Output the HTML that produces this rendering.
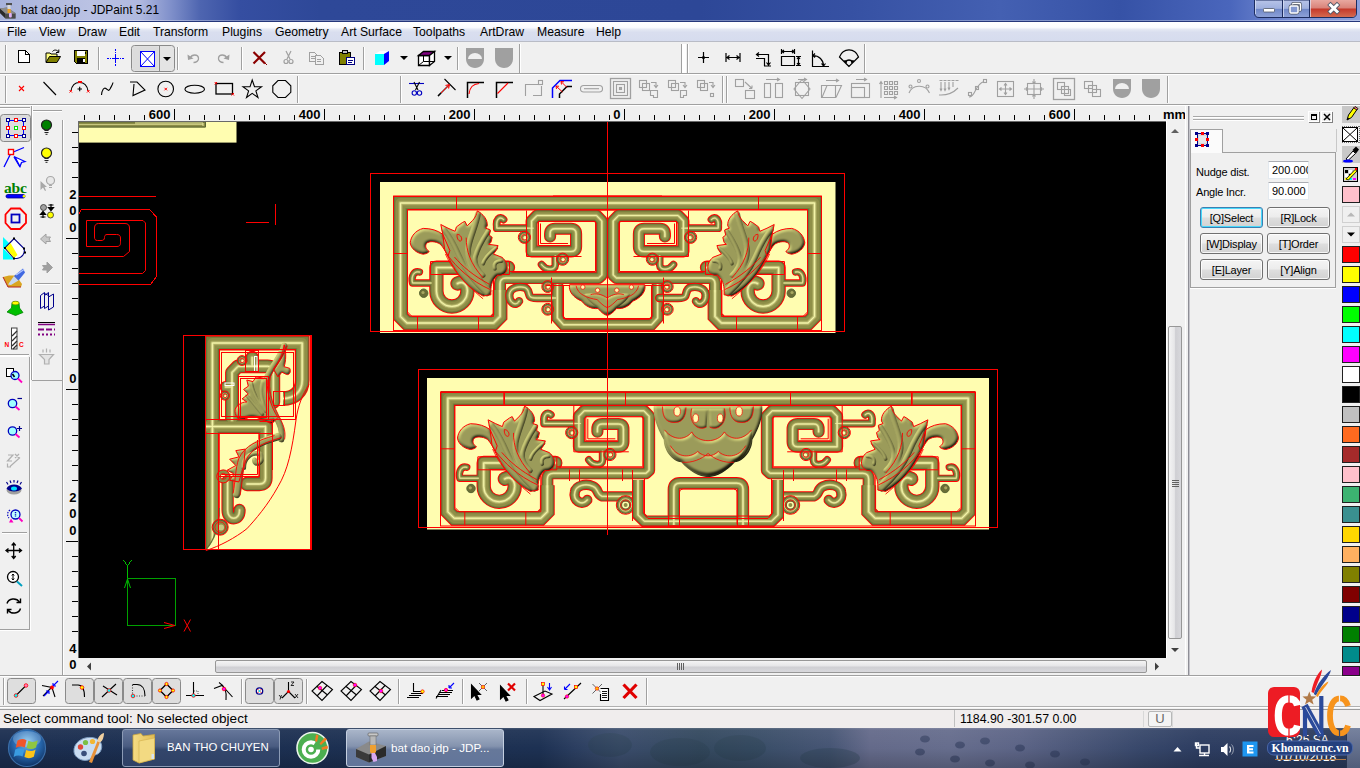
<!DOCTYPE html>
<html>
<head>
<meta charset="utf-8">
<title>bat dao.jdp - JDPaint 5.21</title>
<style>
html,body{margin:0;padding:0;}
body{width:1360px;height:768px;overflow:hidden;position:relative;background:#f0f0f0;font-family:"Liberation Sans",sans-serif;font-size:13px;color:#000;}
.abs{position:absolute;}
#title{left:0;top:0;width:1360px;height:22px;background:linear-gradient(90deg,#a7b2db 0px,#bac2e3 90px,#b0b9df 140px,#8191cb 170px,#4e65b0 200px,#354ea1 240px,#2e4898 320px,#2d4797 700px,#3651a3 850px,#4460b2 1000px,#3652a6 1120px,#4a66bc 1230px,#7d93d6 1300px,#8ca0dc 1360px);border-bottom:1px solid #25377a;box-sizing:border-box;}
#titleglow{left:0;top:20px;width:1360px;height:1px;background:rgba(255,255,255,.35);}
#titletxt{left:21px;top:3px;font-size:11.95px;color:#000;white-space:nowrap;}
#menubar{left:0;top:22px;width:1360px;height:20px;box-sizing:border-box;background:linear-gradient(180deg,#ffffff 0%,#fbfcfe 28%,#e3e7f3 40%,#d9deef 55%,#d6dcee 100%);border-bottom:1px solid #b9bcc6;}
#menubar span{position:absolute;top:3px;font-size:12.2px;white-space:nowrap;}
#canvas{left:78px;top:121px;width:1088px;height:537px;background:#000;overflow:hidden;box-sizing:border-box;border-left:1px solid #696969;border-top:1px solid #696969;}
.hline{height:1px;background:#a0a0a0;}
.hline2{height:1px;background:#ffffff;}
.vsep{width:1px;background:#a0a0a0;}
.vsep2{width:1px;background:#ffffff;}
.lbl{font-size:11px;letter-spacing:-.2px;white-space:nowrap;}
.inp{width:41px;height:18px;box-sizing:border-box;background:#fff;border:1px solid #e3e9ef;border-top-color:#abadb3;font-size:11px;line-height:16px;padding-left:3px;overflow:hidden;white-space:nowrap;border-radius:1px;}
.btn{width:63px;height:21px;box-sizing:border-box;border:1px solid #707070;border-radius:3px;background:linear-gradient(180deg,#f4f4f4 0%,#ececec 48%,#dedede 52%,#d2d2d2 100%);font-size:11px;letter-spacing:-.2px;line-height:20px;text-align:center;white-space:nowrap;box-shadow:inset 0 0 0 1px rgba(255,255,255,.8);}
.btn.foc{border-color:#3c7fb1;box-shadow:inset 0 0 0 1px #48d8fb;}
</style>
</head>
<body>
<!-- TITLE BAR -->
<div id="title" class="abs"></div>
<div id="titleglow" class="abs"></div>
<div id="titletxt" class="abs">bat dao.jdp - JDPaint 5.21</div>
<!--TITLE-START-->
<svg class="abs" style="left:0;top:0" width="1360" height="22" viewBox="0 0 1360 22">
<defs><linearGradient id="wb" x1="0" y1="0" x2="0" y2="1"><stop offset="0" stop-color="#b8c4e8"/><stop offset=".48" stop-color="#9fb0de"/><stop offset=".52" stop-color="#7088c8"/><stop offset="1" stop-color="#8ea2d8"/></linearGradient>
<linearGradient id="wr" x1="0" y1="0" x2="0" y2="1"><stop offset="0" stop-color="#e8a8a0"/><stop offset=".48" stop-color="#d98278"/><stop offset=".52" stop-color="#c4382a"/><stop offset="1" stop-color="#d46a50"/></linearGradient></defs>
<!-- app icon -->
<path d="M0 8.500L7 7.500L15.500 13V18.500H5.500L0 13Z" fill="#6a6a6a"/><path d="M0 8.500L5.500 13.500V18.500L0 13Z" fill="#2a2a2a"/><path d="M5.500 13.500H15.500V18.500H5.500Z" fill="#4a4a4a"/><path d="M0 8.500L7 7.500L15.500 13.500H5.500Z" fill="#8c8c8c"/>
<rect x="6" y="3" width="6" height="2.200" fill="#505050"/><rect x="7.500" y="5" width="3" height="4" fill="#d8d8d8"/><rect x="7.500" y="9" width="3.200" height="4" fill="#f0a020"/><rect x="9" y="13" width="2.800" height="4.500" rx="1" fill="#e0b0f8"/>
<!-- window buttons -->
<path d="M1254.500 0V13C1254.500 16 1256 17.500 1259 17.500H1352C1355 17.500 1356.500 16 1356.500 13V0Z" fill="url(#wb)" stroke="#1c2c60" stroke-width="1"/>
<path d="M1309.500 0V17H1352C1354.500 17 1356 15.500 1356 13V0Z" fill="url(#wr)"/>
<path d="M1282.500 0V17M1309.500 0V17" stroke="#1c2c60" stroke-width="1"/><path d="M1283.500 0V17M1310.500 0V17M1255.500 0V14" stroke="#dfe6f8" stroke-width="1" opacity=".7"/>
<rect x="1263.500" y="8.500" width="11" height="3.500" rx=".8" fill="#fff" stroke="#505868" stroke-width=".8"/>
<rect x="1292.500" y="3.500" width="8" height="7" rx="1" fill="none" stroke="#505868" stroke-width="2.800"/><rect x="1292.500" y="3.500" width="8" height="7" rx="1" fill="none" stroke="#fff" stroke-width="1.400"/>
<rect x="1290" y="6" width="8" height="7" rx="1" fill="#8398d0" stroke="#505868" stroke-width="2.800"/><rect x="1290" y="6" width="8" height="7" rx="1" fill="#8398d0" stroke="#fff" stroke-width="1.500"/>
<path d="M1330.500 5L1337 11.500M1337 5L1330.500 11.500" stroke="#505868" stroke-width="4.600" stroke-linecap="square"/><path d="M1330.500 5L1337 11.500M1337 5L1330.500 11.500" stroke="#fff" stroke-width="3" stroke-linecap="square"/>
</svg>
<!--TITLE-END-->
<!-- MENU -->
<div id="menubar" class="abs">
<span style="left:7px">File</span><span style="left:39px">View</span><span style="left:78px">Draw</span><span style="left:119px">Edit</span><span style="left:153px">Transform</span><span style="left:222px">Plugins</span><span style="left:275px">Geometry</span><span style="left:341px">Art Surface</span><span style="left:413px">Toolpaths</span><span style="left:480px">ArtDraw</span><span style="left:537px">Measure</span><span style="left:596px">Help</span>
</div>
<!-- TOOLBARS PLACEHOLDER -->
<div id="tb1" class="abs" style="left:0;top:43px;width:1360px;height:30px;"></div>
<div class="abs hline" style="left:0;top:73px;width:1360px;"></div>
<div class="abs hline2" style="left:0;top:74px;width:1360px;"></div>
<div id="tb2" class="abs" style="left:0;top:75px;width:1360px;height:29px;"></div>
<div class="abs hline" style="left:0;top:104px;width:1360px;"></div>
<div class="abs hline2" style="left:0;top:105px;width:1360px;"></div>
<!--TB-START-->
<!-- TOOLBAR ICONS (page coords) -->
<svg class="abs" style="left:0;top:0" width="1360" height="121" viewBox="0 0 1360 121" shape-rendering="crispEdges">
<!-- grippers toolbar1 -->
<g fill="none">
<path d="M5.5 45V71" stroke="#a0a0a0"/><path d="M6.5 45V71" stroke="#fff"/>
<path d="M98.5 47V70M177.5 47V70M241.5 47V70M363.5 47V70M457.5 47V70M519.5 44V73" stroke="#a0a0a0"/>
<path d="M99.5 47V70M178.5 47V70M242.5 47V70M364.5 47V70M458.5 47V70M520.5 44V73" stroke="#fff"/>
<path d="M681.5 44V73M687.5 44V73M864.5 44V73" stroke="#a0a0a0"/><path d="M682.5 44V73M683.5 44V73M684.5 44V73M685.5 44V73M688.5 44V73M865.5 44V73" stroke="#fff"/>
</g>
<!-- New -->
<path d="M18.5 50.5H25.5L29.5 54.5V62.5H18.5Z" fill="#fff" stroke="#000"/><path d="M25.5 50.5V54.5H29.5" fill="none" stroke="#000"/>
<!-- Open -->
<g shape-rendering="auto">
<path d="M46 62V53H50L51 54H57V56" fill="#ffff80" stroke="#000" stroke-width="1"/>
<path d="M46 62.5L49.5 56.5H60.5L57 62.5Z" fill="#808000" stroke="#000" stroke-width="1"/>
<path d="M52.5 51.5C54 49.5 57 49.5 58.5 52M58.8 49.5V52.5H56" fill="none" stroke="#000" stroke-width="1"/>
</g>
<!-- Save -->
<path d="M74.5 50.5H87.5V63.5H76.5L74.5 61.5Z" fill="#808000" stroke="#000"/>
<rect x="77" y="51" width="8" height="5" fill="#fff"/><rect x="77" y="58" width="8" height="5" fill="#000"/><rect x="83" y="59" width="2" height="3" fill="#fff"/><rect x="85" y="52" width="1" height="2" fill="#000"/>
<!-- crosshair blue -->
<path d="M107 58.5H124M115.5 49V67" stroke="#0000ff" stroke-dasharray="2 1 1 1" fill="none"/>
<path d="M112 58.5H119M115.5 55V62" stroke="#0000ff" fill="none"/>
<!-- selected button -->
<g shape-rendering="auto">
<rect x="131.5" y="45.5" width="43" height="26" rx="3" fill="#e4e4e4" stroke="#8a8a8a"/>
<rect x="132.5" y="46.5" width="26" height="24" rx="2" fill="#dcdcdc" stroke="none"/>
<path d="M159.5 46V71" stroke="#8a8a8a"/>
</g>
<rect x="140.500" y="51.500" width="14" height="15" fill="#fff" stroke="#0000ff" stroke-width="1"/>
<path d="M140.500 51.500L154.500 66.500M154.500 51.500L140.500 66.500" stroke="#0000ff" fill="none" shape-rendering="auto"/>
<path d="M163 57H171L167 61Z" fill="#000" shape-rendering="auto"/>
<!-- undo / redo gray -->
<g shape-rendering="auto" fill="none" stroke="#a0a0a0" stroke-width="1.3">
<path d="M190 58C192 54 198 54 198.500 58C199 61 196 62.500 193.500 62.500"/><path d="M187.500 54.500L188 60L193.500 58.500Z" fill="#a0a0a0" stroke="none"/>
<path d="M227 58C225 54 219 54 218.500 58C218 61 221 62.500 223.500 62.500"/><path d="M229.500 54.500L229 60L223.500 58.500Z" fill="#a0a0a0" stroke="none"/>
</g>
<!-- red X -->
<g shape-rendering="auto"><path d="M253.500 52L265 63.500M265 52L253.500 63.500" stroke="#8b0000" stroke-width="2.200" fill="none"/><path d="M265 63L267 65" stroke="#8b0000" stroke-width="1"/></g>
<!-- scissors gray -->
<g shape-rendering="auto" fill="none" stroke="#a0a0a0" stroke-width="1.200"><path d="M286 51L290 59M291 51L287 59"/><circle cx="286" cy="61.500" r="2"/><circle cx="291" cy="61.500" r="2"/></g>
<!-- copy gray -->
<g fill="#f0f0f0" stroke="#a0a0a0"><path d="M309.500 52.500H314.500L317.500 55.500V61.500H309.500Z"/><path d="M315.500 55.500H320.500L323.500 58.500V64.500H315.500Z"/><path d="M311 56.500H315M311 58.500H315M317 59.500H321M317 61.500H321" /></g>
<!-- paste -->
<g><rect x="339.500" y="52.500" width="11" height="12" fill="#808000" stroke="#000"/><rect x="342.500" y="50.500" width="5" height="3" fill="#c0c0c0" stroke="#000"/><rect x="346.500" y="57.500" width="8" height="7" fill="#fff" stroke="#000080"/><path d="M348 60.500H353M348 62.500H352" stroke="#000080"/></g>
<!-- cyan cube -->
<g shape-rendering="auto"><path d="M375 54H384V65H375Z" fill="#00ffff"/><path d="M375 54L380 51H389L384 54Z" fill="#fff"/><path d="M384 54L389 51V61L384 65Z" fill="#0000ff"/>
<path d="M400 56H408L404 60Z" fill="#000"/>
<!-- wire cube -->
<path d="M418.500 55.500H429.500V65.500H418.500Z" fill="#fff" stroke="#000" stroke-width="1.300"/><path d="M418.500 55.500L423.500 51.500H434.500L429.500 55.500Z" fill="#800080" stroke="#000" stroke-width="1.300"/><path d="M429.500 55.500L434.500 51.500V61.500L429.500 65.500Z" fill="#fff" stroke="#000" stroke-width="1.300"/><path d="M418.500 65.500L423.500 61.500H434.500M423.500 61.500V56" fill="none" stroke="#000" stroke-width="1"/>
<path d="M444 56H452L448 60Z" fill="#000"/>
<!-- gray shields -->
<path d="M466 48H484V59C484 64 480 68 475 68C470 68 466 64 466 59Z" fill="#a0a0a0"/><path d="M468 59A7 6 0 0 1 482 59Z" fill="#f0f0f0"/>
<path d="M495 48H513V59C513 64 509 68 504 68C499 68 495 64 495 59Z" fill="#a0a0a0"/>
</g>
<!-- measure icons -->
<g shape-rendering="auto" fill="none" stroke="#000" stroke-width="1.200">
<path d="M698 57.500H709M703.500 52V63"/><circle cx="703.500" cy="57.500" r="1.600" fill="#000" stroke="none"/>
<path d="M726 53V62M740 53V62M727 57.500H739M729.500 55.500L727 57.500L729.500 59.500M736.500 55.500L739 57.500L736.500 59.500"/>
<path d="M756.500 54.500H768.500V65M759 52.500L756.500 54.500L759 56.500M766.500 62.500L768.500 65L770.500 62.500M756 58.500H764.500V66M764 66H771" />
<path d="M781.500 56.500H794.500V65.500H781.500ZM781.500 49V54M794.500 49V54M782 51.500H794M784 50L782 51.500L784 53M792 50L794 51.500L792 53M796 56.500H801M796 65.500H801M798.500 57V65M797 59L798.500 57L800 59M797 63L798.500 65L800 63"/>
<path d="M812.500 50.500V66.500H829M813 55.500C819 55.500 823.500 60 823.500 66M815 53.500L813 55.500L815 57.500M821.500 63.500L823.500 66L825.500 63.500"/>
<path d="M849 66.500L839.500 57C843 47.500 855 47.500 858.500 57ZM845 62C847.500 59.500 850.500 59.500 853 62M845 60V62.200H847M853 60V62.200H851"/>
</g>
<!-- ===== toolbar 2 ===== -->
<g fill="none">
<path d="M5.500 76V103M297.500 76V103M400.500 76V103M722.500 76V103M726.500 76V103M1167.500 76V103" stroke="#a0a0a0"/>
<path d="M6.500 76V103M298.500 76V103M401.500 76V103M723.500 76V103M727.500 76V103M1168.500 76V103" stroke="#fff"/>
</g>
<g shape-rendering="auto" fill="none" stroke="#000" stroke-width="1.100">
<path d="M19 86L24 91M24 86L19 91" stroke="#ff0000"/>
<path d="M43.500 82L56 95"/>
<path d="M71 91C72 84.500 76 82.500 79.500 82.500C83 82.500 87 84.500 88 91M77.500 89H82M79.700 86.700V91.300"/>
<path d="M69.500 90L72 92.500M72 90L69.500 92.500M87 90L89.500 92.500M89.500 90L87 92.500M78 81L80 83M80 81L78 83M80 81L82 83M82 81L80 83" stroke="#ff0000" stroke-width="1"/>
<path d="M101.500 95C102 90 104 87 106 88.500C108 90 108.500 91.500 110 89C111.500 86 112.500 85 113 82.500"/>
<path d="M130 82H137L145 90L133 95.500L134 84"/>
<circle cx="165.700" cy="89" r="7.800"/><path d="M164.500 87.800L167 90.300M167 87.800L164.500 90.300" stroke="#ff0000" stroke-width="1"/>
<ellipse cx="194.700" cy="89.200" rx="9.800" ry="4"/>
<rect x="216" y="83.500" width="16.500" height="10.500" stroke-width="1.300"/><path d="M214.700 82L217 84.500M217 82L214.700 84.500M231.500 93L234 95.500M234 93L231.500 95.500" stroke="#ff0000" stroke-width="1"/>
<path d="M252.200 80L254.500 86.800H261.500L255.900 90.900L258 97.500L252.200 93.400L246.500 97.500L248.600 90.900L243 86.800H250Z"/>
<path d="M278 80.500H285.500L290.800 85.800V92.300L285.500 97.500H278L272.800 92.300V85.800Z"/>
</g>
<!-- toolbar2 middle group -->
<g shape-rendering="auto" fill="none" stroke="#000" stroke-width="1.100">
<path d="M409 83.500H424" stroke="#0000c0"/><path d="M414 82L418 90M419.500 82L415.500 90" /><circle cx="414.300" cy="93" r="2.200" stroke="#0000c0"/><circle cx="419.500" cy="93" r="2.200" stroke="#0000c0"/>
<path d="M444.500 79L455.500 90"/><path d="M438 96L449 85" /><path d="M449.500 84.500L445.500 85.500M449.500 84.500L448.500 88.500" stroke="#ff0000"/><path d="M440 94L449 85" stroke="#ff0000" stroke-width="1"/><path d="M438 96L441 93"/>
<path d="M467.500 98V82.500H484" stroke-width="1.500"/><path d="M469 94C469.500 88 473 84 479 83.500" stroke="#ff0000"/>
<path d="M496.500 98V82.500H513" stroke-width="1.500"/><path d="M497.500 93.500L508 83" stroke="#ff0000"/>
<g stroke="#a0a0a0"><path d="M525.500 96V84.500H538M541.500 86V95.500H533"/><rect x="538.500" y="80.500" width="4" height="4"/></g>
<path d="M552.500 98V88L560 80.500H572" stroke="#0000ff" stroke-width="1.500"/><path d="M559.500 98V94L567 86.500H572" stroke-width="1.500"/><path d="M562.500 92L556 86M556 86L556.500 89M556 86L559 86.300M567 87.500L561 81.500M561 81.500L561.500 84.500M561 81.500L564 81.800" stroke="#ff0000" stroke-width="1"/>
<g stroke="#a0a0a0"><rect x="580.500" y="85.500" width="22" height="6.500" rx="3.200"/><path d="M584 88.700H599"/>
<rect x="610.500" y="78.500" width="20" height="20" stroke-width="1.300"/><rect x="613.500" y="81.500" width="14" height="14"/><rect x="616.500" y="84.500" width="8" height="8"/><rect x="619.500" y="87.500" width="2" height="2"/>
<rect x="639.500" y="80.500" width="7" height="7"/><rect x="642.500" y="83.500" width="7" height="7"/><path d="M651 82.500H656V87M654 85L656 87.500L658 85"/><path d="M650.500 90.500H657.500V97.500H653.500V95.500H650.500Z"/>
<rect x="668.500" y="80.500" width="7" height="7"/><rect x="671.500" y="83.500" width="7" height="7"/><path d="M680 82.500H685V87M683 85L685 87.500L687 85"/><path d="M680.500 90.500H686.500V95.500H683.500V97.500H680.500Z"/>
<rect x="697.500" y="80.500" width="7" height="7"/><rect x="700.500" y="83.500" width="7" height="7"/><path d="M709 82.500H713V87M711 85L713 87.500L715 85"/><rect x="710.500" y="93.500" width="3" height="3"/>
</g>
</g>
<!-- toolbar2 gray transform group -->
<g shape-rendering="auto" fill="none" stroke="#a0a0a0" stroke-width="1.100">
<rect x="735.500" y="79.500" width="8" height="7"/><rect x="745.500" y="90.500" width="9" height="8"/><path d="M745 82L752 88.500M752 88.500V85.500M752 88.500H749"/>
<rect x="764.500" y="83.500" width="6" height="14"/><rect x="775.500" y="83.500" width="7" height="14"/><path d="M766 79.500H779M777 78L779.500 79.500L777 81"/>
<rect x="795.500" y="82.500" width="13" height="13"/><path d="M802 79.500L810 89L802 98.500L794 89Z"/><path d="M798 79.500H806M804 78L806.500 79.500L804 81"/>
<path d="M821.500 85.500H835.500V97.500H821.500Z"/><path d="M822 97.500L827 85.500H841.500L836 97.500"/><path d="M826 80.500H838M836 79L838.500 80.500L836 82"/>
<rect x="851.500" y="83.500" width="18" height="14"/><rect x="851.500" y="87.500" width="13" height="10"/><path d="M856 79.500H866M864 78L866.500 79.500L864 81"/>
<path d="M881 82V98M879.500 84L881 81.500L882.500 84"/><path d="M884.500 81.500h3v3h-3zM889.500 81.500h3v3h-3zM894.500 81.500h3v3h-3zM884.500 86.500h3v3h-3zM889.500 86.500h3v3h-3zM894.500 86.500h3v3h-3zM884.500 91.500h3v3h-3zM889.500 91.500h3v3h-3zM894.500 91.500h3v3h-3z"/><path d="M884 97.500H896M894 96L896.500 97.500L894 99"/>
<path d="M909 93C912 85 925 83 929.500 93"/><circle cx="919" cy="81" r="1.500"/><circle cx="927.500" cy="86.500" r="1.500"/><circle cx="910.500" cy="86.500" r="1.500"/>
<path d="M939 95C946 95.500 953 93 958 88"/><path d="M941 82V90M945 82V90M949 82V89M953 82V87M940 88.500L941 90.500L942 88.500M944 88.500L945 90.500L946 88.500M948 87.500L949 89.500L950 87.500"/><path d="M939.500 80.500h3M943.500 80.500h3M947.500 80.500h3M951.500 80.500h3M955.500 80.500h3" />
<path d="M969 97C976 97 974 85 984 81.500"/><rect x="968.500" y="92.500" width="3" height="3"/><rect x="975.500" y="86.500" width="3" height="3"/><rect x="983.500" y="79.500" width="3" height="3"/>
<rect x="997.500" y="81.500" width="16" height="15"/><path d="M1005.500 84V94M1000 89H1011M1004 85.500L1005.500 83.500L1007 85.500M1004 92.500L1005.500 94.500L1007 92.500M1001.500 87.500L999.500 89L1001.500 90.500M1009.500 87.500L1011.500 89L1009.500 90.500"/>
<rect x="1027.500" y="83.500" width="13" height="11"/><path d="M1034 79V99M1024 89H1044M1032.500 81.500L1034 84L1035.500 81.500M1032.500 96.500L1034 94L1035.500 96.500M1026 87.500L1028 89L1026 90.500M1042 87.500L1040 89L1042 90.500"/>
<rect x="1053.500" y="78.500" width="21" height="21" stroke-width="1.300"/><rect x="1057.500" y="82.500" width="7" height="7"/><rect x="1061.500" y="86.500" width="7" height="7"/><rect x="1064.500" y="89.500" width="6" height="6"/>
<rect x="1084.500" y="81.500" width="8" height="7"/><rect x="1088.500" y="85.500" width="8" height="7"/><rect x="1092.500" y="89.500" width="8" height="7"/>
<path d="M1113 79H1131V89C1131 94 1127 98 1122 98C1117 98 1113 94 1113 89Z" fill="#a0a0a0" stroke="none"/><path d="M1115 89A7 6 0 0 1 1129 89Z" fill="#f0f0f0" stroke="none"/>
<path d="M1142 79H1160V89C1160 94 1156 98 1151 98C1146 98 1142 94 1142 89Z" fill="#a0a0a0" stroke="none"/>
</g>
</svg>
<!--TB-END-->
<!--LEFT-START-->
<!-- LEFT TOOLBARS -->
<svg class="abs" style="left:0;top:0" width="80" height="680" viewBox="0 0 80 680">
<g shape-rendering="crispEdges" fill="none">
<path d="M0 107.500H30M33 110.500H62" stroke="#a0a0a0"/><path d="M0 108.500H30M33 111.500H62" stroke="#fff"/>
<path d="M31.500 106V380M62.500 120V676" stroke="#a0a0a0"/><path d="M32.500 106V380M63.500 120V676" stroke="#fff"/>
<path d="M32 380.500H62M0 354.500H29M0 629.500H30" stroke="#a0a0a0"/><path d="M0 355.500H29M0 356.500H28" stroke="#fff"/>
<path d="M29.500 357V629" stroke="#a0a0a0"/><path d="M30.500 357V630M0 630.500H31" stroke="#fff"/>
<path d="M35 283.500H60M2 532.500H27" stroke="#a0a0a0"/><path d="M35 284.500H60M2 533.500H27" stroke="#fff"/>
</g>
<!-- select tool button -->
<rect x="0.500" y="114.500" width="30" height="27" rx="3" fill="#dcdcdc" stroke="#8a8a8a"/>
<g shape-rendering="crispEdges">
<rect x="8.500" y="120.500" width="15" height="15" fill="none" stroke="#0000ff" stroke-width="1"/>
<g fill="#fff" stroke="#00008b"><rect x="6.500" y="118.500" width="3" height="3"/><rect x="22.500" y="118.500" width="3" height="3"/><rect x="6.500" y="134.500" width="3" height="3"/><rect x="22.500" y="134.500" width="3" height="3"/></g>
<g fill="#fff" stroke="#ff0000"><rect x="14.500" y="118.500" width="3" height="3"/><rect x="14.500" y="134.500" width="3" height="3"/><rect x="6.500" y="126.500" width="3" height="3"/><rect x="22.500" y="126.500" width="3" height="3"/></g>
<rect x="14.500" y="126.500" width="3" height="3" fill="#fff" stroke="#00e000"/>
</g>
<!-- node tool -->
<g fill="none" stroke="#0000ff" stroke-width="1.300"><path d="M11 153L4 167M11 153L24 147.500M14 157L20 167"/><path d="M15 157L25 161.500L21.500 162.500L20 166.500Z" fill="#fff"/></g>
<rect x="8.500" y="149.500" width="5" height="5" fill="#fff" stroke="#ff0000" stroke-width="1.400"/>
<!-- abc -->
<text x="15.500" y="193" font-family="Liberation Serif, serif" font-weight="bold" font-size="15.500px" fill="#008000" text-anchor="middle" textLength="23">abc</text>
<rect x="6" y="194.500" width="19" height="3.500" rx="1.700" fill="#0000ff" stroke="#00008b" stroke-width=".8"/><circle cx="24" cy="196.200" r="1.300" fill="#ffff00"/>
<!-- octagon -->
<path d="M11 208.500H20L26 214.500V223L20 229H11L5.500 223V214.500Z" fill="none" stroke="#ff0000" stroke-width="1.800"/>
<rect x="11.500" y="214.500" width="8" height="8" fill="none" stroke="#0000c0" stroke-width="1.800"/>
<!-- cyan/yellow shape -->
<path d="M3 237V259.500H14L3 248Z" fill="#00ffff"/><path d="M3 237L14 248L3 248Z" fill="#00ffff"/>
<path d="M5 248L14 238.500L24 248.500C25.500 253 22 258 17 258.500H14Z" fill="#fff" stroke="#00008b" stroke-width="1.200"/>
<path d="M5.500 248L10.500 243L17.500 255L14 258Z" fill="#ffff00"/>
<g fill="#000"><rect x="13" y="237.500" width="2" height="2"/><rect x="4" y="247" width="2" height="2"/><rect x="23" y="247.500" width="2" height="2"/><rect x="13" y="257.500" width="2" height="2"/><rect x="24" y="251.500" width="2" height="2"/></g>
<!-- pen on plane -->
<path d="M3 277L9 275.500H16L22 284L21 287H8Z" fill="#daa520"/><path d="M3 277L8 287H21" fill="none" stroke="#b22222" stroke-width="1"/>
<path d="M8 284.500L14 276L18.500 280.500L11 285Z" fill="#c8d8f0"/><path d="M14 276L23 268.500L25 272.500L18.500 280.500Z" fill="#4169e1"/><path d="M16 275L24 269.500" stroke="#b0c4ff" stroke-width="1.500"/>
<!-- green cone -->
<path d="M12 303C12 301 19 301 19 303L19.500 308L23 312.500L15.500 315.500L7 312L11.500 308Z" fill="#00c000" stroke="#008000" stroke-width=".8"/><ellipse cx="15.500" cy="303" rx="3.500" ry="1.800" fill="#ffff00" stroke="#808000" stroke-width=".6"/>
<!-- NC drill -->
<rect x="11.500" y="328" width="5.500" height="21" fill="#fff" stroke="#404040" stroke-width="1"/><path d="M12 336L17 331M12 341L17 336M12 346L17 341M13 349L17 345" stroke="#303030" stroke-width="1.300"/>
<text x="4.500" y="347" font-family="Liberation Sans, sans-serif" font-weight="bold" font-size="6.500px" fill="#ff0000">N</text><text x="19" y="347" font-family="Liberation Sans, sans-serif" font-weight="bold" font-size="6.500px" fill="#ff0000">C</text>
<!-- col 2 : bulbs -->
<g>
<circle cx="46.500" cy="125" r="5" fill="#008000" stroke="#202020" stroke-width="1.200"/><path d="M44.500 130.500H48.500M44.500 132.500H48.500M45.500 134.300H47.500" stroke="#202020" stroke-width="1"/>
<circle cx="46.500" cy="153" r="5" fill="#ffff00" stroke="#202020" stroke-width="1.200"/><path d="M44.500 158.500H48.500M44.500 160.500H48.500M45.500 162.300H47.500" stroke="#202020" stroke-width="1"/>
<circle cx="50.500" cy="180.500" r="4" fill="#e8e8e8" stroke="#a8a8a8" stroke-width="1.200"/><path d="M49 185.500H52M49 187.500H52" stroke="#a8a8a8"/><path d="M40.500 181V190L43 187.500L45 191L46 190.500L44.500 187H47Z" fill="#a8a8a8"/>
<circle cx="43.500" cy="207.500" r="3" fill="#a0a0a0" stroke="#303030" stroke-width=".8"/><circle cx="50.500" cy="215" r="3" fill="#ffff00" stroke="#303030" stroke-width=".8"/>
<path d="M48.500 205H53.500M51 204V209.500M48.500 207.500L51 210.500L53.500 207.500Z" fill="#000" stroke="#000" stroke-width="1.200"/>
<path d="M40.500 217H45.500M43 218V212.500M40.500 214.500L43 211.500L45.500 214.500Z" fill="#000" stroke="#000" stroke-width="1.200"/>
<path d="M40.500 239L46 234V237H50.500L49 239L50.500 241.500H46V244Z" fill="#c8c8c8" stroke="#a0a0a0"/>
<path d="M52.500 267.500L47 262V265.500H42.500L44 267.500L42.500 270H47V273Z" fill="#a0a0a0" stroke="#a0a0a0"/>
<g fill="#f0f0f0" stroke="#00008b" stroke-width="1"><path d="M40.500 295.500L44.500 292.500V306L40.500 308.500Z"/><path d="M44.500 295.500L48.500 292.500V306L44.500 308.500Z"/><path d="M48.500 297L53.500 294V307L48.500 310Z"/><path d="M44.500 293.500L48.500 295.500"/></g>
<path d="M38 322.500H55" stroke="#000" stroke-width="1"/><path d="M38 324.500H55" stroke="#800080" stroke-width="1.500"/>
<path d="M38 329.500H55" stroke="#800080" stroke-width="1.800" stroke-dasharray="6 2"/><path d="M38 334.500H55" stroke="#800080" stroke-width="1.800" stroke-dasharray="2 2"/>
<g fill="none" stroke="#b0b0b0" stroke-width="1.200"><path d="M39.500 354.500H53.500L49 359.500V364H44.500V359.500Z" fill="#e4e4e4"/><path d="M43 349.500V352.500M46.500 348.500V352.500M50 349.500V352.500"/></g>
</g>
<!-- zoom column -->
<g fill="none">
<rect x="6.500" y="368.500" width="7" height="8" stroke="#000" fill="#fff"/>
<circle cx="15" cy="375.500" r="4" fill="#a0ffff" stroke="#0000c0" stroke-width="1.300"/><path d="M18 378.500L22 382.500" stroke="#ff00c0" stroke-width="1.800"/><path d="M12.500 374L14.500 377" stroke="#000" stroke-width="1.600"/>
<circle cx="12.500" cy="403.500" r="4.200" fill="#a0ffff" stroke="#0000c0" stroke-width="1.300"/><path d="M15.500 406.500L19.500 410" stroke="#ff00c0" stroke-width="1.800"/><path d="M17.500 398.500H22" stroke="#00008b" stroke-width="1.200"/>
<circle cx="12.500" cy="431" r="4.200" fill="#a0ffff" stroke="#0000c0" stroke-width="1.300"/><path d="M15.500 434L19.500 437.500" stroke="#ff00c0" stroke-width="1.800"/><path d="M17 428.500H22M19.500 426V431" stroke="#00008b" stroke-width="1.200"/>
<path d="M8 455H13L7.500 461H12M15 454L19 458M19 454L15 458M10 466.500L20 457.500M7.500 463.500V467H11" stroke="#b0b0b0" stroke-width="1.200"/>
<ellipse cx="14" cy="490" rx="7.500" ry="4.500" fill="#a0a0a0"/><path d="M6.500 488.500C9 483 19 483 22 488.500C19 492.500 9 492.500 6.500 488.500Z" fill="#00008b"/><ellipse cx="14" cy="488.500" rx="3" ry="2" fill="#00e0ff"/>
<path d="M8 484.500L6.500 482M11 483L10 480.500M14 482.500V480M17 483L18 480.500M20 484.500L21.500 482" stroke="#00008b" stroke-width="1.200"/>
<circle cx="15.500" cy="514.500" r="4.500" fill="#c0ffff" stroke="#0000c0" stroke-width="1.300"/><path d="M19 518L22.500 521.500" stroke="#ff00c0" stroke-width="1.800"/><path d="M15.500 512V517" stroke="#0000c0" stroke-width="1.400" stroke-dasharray="1.200 1"/>
<path d="M10 510C7 512 7 516 9 518" stroke="#0000c0" stroke-width="1.200" stroke-dasharray="1.500 1.200"/><path d="M9 522.500L11 518.500L13.500 522.500Z" fill="#ff00c0"/>
<path d="M6.500 550.500H21M13.700 543.500V558M11.700 545.500L13.700 543L15.700 545.500M11.700 556L13.700 558.500L15.700 556M8.500 548.500L6 550.500L8.500 552.500M19 548.500L21.500 550.500L19 552.500" stroke="#000" stroke-width="1.300"/>
<circle cx="13" cy="577" r="5.500" fill="#fff" stroke="#000" stroke-width="1.300"/><path d="M17 581.500L22 586" stroke="#00a0c0" stroke-width="2"/><path d="M13 574V580M11.800 575.500L13 574L14.200 575.500M11.800 578.500L13 580L14.200 578.500" stroke="#000" stroke-width="1"/>
<path d="M7 603.500C8.500 598 16.500 597.500 19.500 602M20.500 608.500C19 614 11 614.500 8 610" stroke="#000" stroke-width="1.400"/><path d="M16.500 602.500H20.500V598.500M11.500 609.500H7.500V613.500" stroke="#000" stroke-width="1.400"/>
</g>
</svg>
<!--LEFT-END-->
<!--RULER-START-->
<!-- RULERS -->
<svg class="abs" style="left:0;top:0" width="1360" height="675" viewBox="0 0 1360 675">
<g shape-rendering="crispEdges" stroke="#000" fill="none"><path d="M84.5 115V120M99.5 115V120M114.5 115V120M129.5 115V120M144.5 115V120M189.5 115V120M204.5 115V120M219.5 115V120M234.5 115V120M249.5 115V120M264.5 115V120M279.5 115V120M294.5 115V120M339.5 115V120M354.5 115V120M369.5 115V120M384.5 115V120M399.5 115V120M414.5 115V120M429.5 115V120M444.5 115V120M489.5 115V120M504.5 115V120M519.5 115V120M534.5 115V120M549.5 115V120M564.5 115V120M579.5 115V120M594.5 115V120M609.5 115V120M639.5 115V120M654.5 115V120M669.5 115V120M684.5 115V120M699.5 115V120M714.5 115V120M729.5 115V120M744.5 115V120M789.5 115V120M804.5 115V120M819.5 115V120M834.5 115V120M849.5 115V120M864.5 115V120M879.5 115V120M894.5 115V120M939.5 115V120M954.5 115V120M969.5 115V120M984.5 115V120M999.5 115V120M1014.5 115V120M1029.5 115V120M1044.5 115V120M1089.5 115V120M1104.5 115V120M1119.5 115V120M1134.5 115V120M1149.5 115V120"/><path d="M174.5 109V120M324.5 109V120M474.5 109V120M624.5 109V120M774.5 109V120M924.5 109V120M1074.5 109V120"/><path d="M72 132.5H78M72 147.5H78M72 162.5H78M72 177.5H78M72 253.5H78M72 268.5H78M72 283.5H78M72 298.5H78M72 314.5H78M72 329.5H78M72 344.5H78M72 359.5H78M72 404.5H78M72 419.5H78M72 435.5H78M72 450.5H78M72 465.5H78M72 480.5H78M72 556.5H78M72 571.5H78M72 586.5H78M72 601.5H78M72 616.5H78M72 631.5H78"/><path d="M66 238.5H78M66 389.5H78M66 541.5H78"/></g>
<g font-family="Liberation Sans, sans-serif" font-weight="bold" font-size="13px" fill="#000"><text x="170.5" y="118.5" text-anchor="end">600</text><text x="320.5" y="118.5" text-anchor="end">400</text><text x="470.5" y="118.5" text-anchor="end">200</text><text x="620.5" y="118.5" text-anchor="end">0</text><text x="770.5" y="118.5" text-anchor="end">200</text><text x="920.5" y="118.5" text-anchor="end">400</text><text x="1070.5" y="118.5" text-anchor="end">600</text><text x="1186" y="118.5" text-anchor="end">mm</text><text x="72.8" y="199.3" text-anchor="middle">2</text><text x="72.8" y="215.4" text-anchor="middle">0</text><text x="72.8" y="231.5" text-anchor="middle">0</text><text x="72.8" y="382.5" text-anchor="middle">0</text><text x="72.8" y="502.3" text-anchor="middle">2</text><text x="72.8" y="518.4" text-anchor="middle">0</text><text x="72.8" y="534.5" text-anchor="middle">0</text><text x="72.8" y="652.6" text-anchor="middle">4</text><text x="72.8" y="668.7" text-anchor="middle">0</text><text x="72.8" y="684.8" text-anchor="middle">0</text></g>
</svg>
<!--RULER-END-->
<!-- CANVAS -->
<div id="canvas" class="abs"><!--ART-START--><svg class="abs" style="left:-1px;top:-1px" width="1088" height="537" viewBox="78 121 1088 537"><defs><filter id="emb" x="-10%" y="-10%" width="120%" height="120%" color-interpolation-filters="sRGB"><feGaussianBlur in="SourceAlpha" stdDeviation="1.7" result="b"/><feDiffuseLighting in="b" surfaceScale="2" diffuseConstant="1" lighting-color="#ebeb8e" result="l"><feDistantLight azimuth="235" elevation="42"/></feDiffuseLighting><feComposite in="l" in2="SourceGraphic" operator="arithmetic" k1="0" k2="0.76" k3="0.26" k4="0" result="m"/><feComposite in="m" in2="SourceAlpha" operator="in"/></filter><filter id="emb2" x="-10%" y="-10%" width="120%" height="120%" color-interpolation-filters="sRGB"><feGaussianBlur in="SourceAlpha" stdDeviation="1.1" result="b"/><feDiffuseLighting in="b" surfaceScale="1.3" diffuseConstant="1" lighting-color="#ebeb8e" result="l"><feDistantLight azimuth="235" elevation="44"/></feDiffuseLighting><feComposite in="l" in2="SourceGraphic" operator="arithmetic" k1="0" k2="0.74" k3="0.28" k4="0" result="m"/><feComposite in="m" in2="SourceAlpha" operator="in"/></filter><g id="mod"><g fill="none"><path d="M662 203H400.5V316.5L407 323H493.5L500 316.5V290" stroke="#ff0000" stroke-width="14.8" stroke-linejoin="miter" stroke-linecap="butt"/><path d="M500 292V284Q500 278 506 278H598.5L601.8 275V221L596.5 215.5H537L531.6 221V251.5H571Q576.1 251.5 576.1 246.5V233.7Q576.1 228.7 571 228.7H555Q550.1 228.7 550.1 233.7V236.5" stroke="#ff0000" stroke-width="12.1" stroke-linejoin="round" stroke-linecap="round"/><path d="M508 267.6H436.4V291A15.5 15.5 0 0 0 467.4 291C467.4 284.5 463 280.5 457.5 283.5" stroke="#ff0000" stroke-width="14.3" stroke-linejoin="round" stroke-linecap="round"/><path d="M419.5 272C414 270.5 411 276 412.5 283H431" stroke="#ff0000" stroke-width="7.3" stroke-linejoin="round" stroke-linecap="round"/><path d="M503.5 219.5C499.5 215.5 496 220 496.8 226V228.2H533" stroke="#ff0000" stroke-width="7.8" stroke-linejoin="round" stroke-linecap="round"/><path d="M555.3 256V265C555 270.5 546 271 541.5 264.5" stroke="#ff0000" stroke-width="7.6" stroke-linejoin="round" stroke-linecap="round"/><path d="M662 203H400.5V316.5L407 323H493.5L500 316.5V290" stroke="#647038" stroke-width="13" stroke-linejoin="miter" stroke-linecap="butt"/><path d="M500 292V284Q500 278 506 278H598.5L601.8 275V221L596.5 215.5H537L531.6 221V251.5H571Q576.1 251.5 576.1 246.5V233.7Q576.1 228.7 571 228.7H555Q550.1 228.7 550.1 233.7V236.5" stroke="#647038" stroke-width="10.3" stroke-linejoin="round" stroke-linecap="round"/><path d="M508 267.6H436.4V291A15.5 15.5 0 0 0 467.4 291C467.4 284.5 463 280.5 457.5 283.5" stroke="#647038" stroke-width="12.5" stroke-linejoin="round" stroke-linecap="round"/><path d="M419.5 272C414 270.5 411 276 412.5 283H431" stroke="#647038" stroke-width="5.5" stroke-linejoin="round" stroke-linecap="round"/><path d="M503.5 219.5C499.5 215.5 496 220 496.8 226V228.2H533" stroke="#647038" stroke-width="6" stroke-linejoin="round" stroke-linecap="round"/><path d="M555.3 256V265C555 270.5 546 271 541.5 264.5" stroke="#647038" stroke-width="5.8" stroke-linejoin="round" stroke-linecap="round"/><path d="M662 203H400.5V316.5L407 323H493.5L500 316.5V290" stroke="#7c823e" stroke-width="11.5" stroke-linejoin="miter" stroke-linecap="butt"/><path d="M500 292V284Q500 278 506 278H598.5L601.8 275V221L596.5 215.5H537L531.6 221V251.5H571Q576.1 251.5 576.1 246.5V233.7Q576.1 228.7 571 228.7H555Q550.1 228.7 550.1 233.7V236.5" stroke="#7c823e" stroke-width="8.8" stroke-linejoin="round" stroke-linecap="round"/><path d="M508 267.6H436.4V291A15.5 15.5 0 0 0 467.4 291C467.4 284.5 463 280.5 457.5 283.5" stroke="#7c823e" stroke-width="11" stroke-linejoin="round" stroke-linecap="round"/><path d="M419.5 272C414 270.5 411 276 412.5 283H431" stroke="#7c823e" stroke-width="4" stroke-linejoin="round" stroke-linecap="round"/><path d="M503.5 219.5C499.5 215.5 496 220 496.8 226V228.2H533" stroke="#7c823e" stroke-width="4.5" stroke-linejoin="round" stroke-linecap="round"/><path d="M555.3 256V265C555 270.5 546 271 541.5 264.5" stroke="#7c823e" stroke-width="4.3" stroke-linejoin="round" stroke-linecap="round"/><path d="M662 203H400.5V316.5L407 323H493.5L500 316.5V290" stroke="#8f8f48" stroke-width="9.8" stroke-linejoin="round" stroke-linecap="butt"/><path d="M500 292V284Q500 278 506 278H598.5L601.8 275V221L596.5 215.5H537L531.6 221V251.5H571Q576.1 251.5 576.1 246.5V233.7Q576.1 228.7 571 228.7H555Q550.1 228.7 550.1 233.7V236.5" stroke="#8f8f48" stroke-width="7.1" stroke-linejoin="round" stroke-linecap="round"/><path d="M508 267.6H436.4V291A15.5 15.5 0 0 0 467.4 291C467.4 284.5 463 280.5 457.5 283.5" stroke="#8f8f48" stroke-width="9.3" stroke-linejoin="round" stroke-linecap="round"/><path d="M419.5 272C414 270.5 411 276 412.5 283H431" stroke="#8f8f48" stroke-width="2.3" stroke-linejoin="round" stroke-linecap="round"/><path d="M503.5 219.5C499.5 215.5 496 220 496.8 226V228.2H533" stroke="#8f8f48" stroke-width="2.8" stroke-linejoin="round" stroke-linecap="round"/><path d="M555.3 256V265C555 270.5 546 271 541.5 264.5" stroke="#8f8f48" stroke-width="2.6" stroke-linejoin="round" stroke-linecap="round"/><path d="M662 203H400.5V316.5L407 323H493.5L500 316.5V290" stroke="#9e9e54" stroke-width="4.9" stroke-linejoin="round" stroke-linecap="butt"/><path d="M500 292V284Q500 278 506 278H598.5L601.8 275V221L596.5 215.5H537L531.6 221V251.5H571Q576.1 251.5 576.1 246.5V233.7Q576.1 228.7 571 228.7H555Q550.1 228.7 550.1 233.7V236.5" stroke="#9e9e54" stroke-width="3.9" stroke-linejoin="round" stroke-linecap="round"/><path d="M508 267.6H436.4V291A15.5 15.5 0 0 0 467.4 291C467.4 284.5 463 280.5 457.5 283.5" stroke="#9e9e54" stroke-width="4.8" stroke-linejoin="round" stroke-linecap="round"/><path d="M419.5 272C414 270.5 411 276 412.5 283H431" stroke="#9e9e54" stroke-width="2.1" stroke-linejoin="round" stroke-linecap="round"/><path d="M503.5 219.5C499.5 215.5 496 220 496.8 226V228.2H533" stroke="#9e9e54" stroke-width="2.3" stroke-linejoin="round" stroke-linecap="round"/><path d="M555.3 256V265C555 270.5 546 271 541.5 264.5" stroke="#9e9e54" stroke-width="2.2" stroke-linejoin="round" stroke-linecap="round"/><path d="M662 203H400.5V316.5L407 323H493.5L500 316.5V290" stroke="#b4b46a" stroke-width="3.4" stroke-linejoin="round" stroke-linecap="butt"/><path d="M500 292V284Q500 278 506 278H598.5L601.8 275V221L596.5 215.5H537L531.6 221V251.5H571Q576.1 251.5 576.1 246.5V233.7Q576.1 228.7 571 228.7H555Q550.1 228.7 550.1 233.7V236.5" stroke="#b4b46a" stroke-width="2.7" stroke-linejoin="round" stroke-linecap="round"/><path d="M508 267.6H436.4V291A15.5 15.5 0 0 0 467.4 291C467.4 284.5 463 280.5 457.5 283.5" stroke="#b4b46a" stroke-width="3.2" stroke-linejoin="round" stroke-linecap="round"/><path d="M419.5 272C414 270.5 411 276 412.5 283H431" stroke="#b4b46a" stroke-width="1.4" stroke-linejoin="round" stroke-linecap="round"/><path d="M503.5 219.5C499.5 215.5 496 220 496.8 226V228.2H533" stroke="#b4b46a" stroke-width="1.6" stroke-linejoin="round" stroke-linecap="round"/><path d="M555.3 256V265C555 270.5 546 271 541.5 264.5" stroke="#b4b46a" stroke-width="1.5" stroke-linejoin="round" stroke-linecap="round"/><path d="M662 203H400.5V316.5L407 323H493.5L500 316.5V290" stroke="#d6d68c" stroke-width="2.1" stroke-linejoin="round" stroke-linecap="butt"/><path d="M500 292V284Q500 278 506 278H598.5L601.8 275V221L596.5 215.5H537L531.6 221V251.5H571Q576.1 251.5 576.1 246.5V233.7Q576.1 228.7 571 228.7H555Q550.1 228.7 550.1 233.7V236.5" stroke="#d6d68c" stroke-width="1.6" stroke-linejoin="round" stroke-linecap="round"/><path d="M508 267.6H436.4V291A15.5 15.5 0 0 0 467.4 291C467.4 284.5 463 280.5 457.5 283.5" stroke="#d6d68c" stroke-width="2" stroke-linejoin="round" stroke-linecap="round"/><path d="M419.5 272C414 270.5 411 276 412.5 283H431" stroke="#d6d68c" stroke-width="0.9" stroke-linejoin="round" stroke-linecap="round"/><path d="M503.5 219.5C499.5 215.5 496 220 496.8 226V228.2H533" stroke="#d6d68c" stroke-width="1" stroke-linejoin="round" stroke-linecap="round"/><path d="M555.3 256V265C555 270.5 546 271 541.5 264.5" stroke="#d6d68c" stroke-width="0.9" stroke-linejoin="round" stroke-linecap="round"/><path d="M662 203H400.5V316.5L407 323H493.5L500 316.5V290" stroke="#f4f4a8" stroke-width="1" stroke-linejoin="round" stroke-linecap="butt"/><path d="M500 292V284Q500 278 506 278H598.5L601.8 275V221L596.5 215.5H537L531.6 221V251.5H571Q576.1 251.5 576.1 246.5V233.7Q576.1 228.7 571 228.7H555Q550.1 228.7 550.1 233.7V236.5" stroke="#f4f4a8" stroke-width="0.8" stroke-linejoin="round" stroke-linecap="round"/><path d="M508 267.6H436.4V291A15.5 15.5 0 0 0 467.4 291C467.4 284.5 463 280.5 457.5 283.5" stroke="#f4f4a8" stroke-width="1" stroke-linejoin="round" stroke-linecap="round"/><path d="M419.5 272C414 270.5 411 276 412.5 283H431" stroke="#f4f4a8" stroke-width="0.4" stroke-linejoin="round" stroke-linecap="round"/><path d="M503.5 219.5C499.5 215.5 496 220 496.8 226V228.2H533" stroke="#f4f4a8" stroke-width="0.5" stroke-linejoin="round" stroke-linecap="round"/><path d="M555.3 256V265C555 270.5 546 271 541.5 264.5" stroke="#f4f4a8" stroke-width="0.5" stroke-linejoin="round" stroke-linecap="round"/></g><circle cx="423.7" cy="293.2" r="4.2" fill="#6a6e36" stroke="#5a6633"/><circle cx="423" cy="292.5" r="1.6" fill="#a8a860"/><circle cx="524.4" cy="237.3" r="5.2" fill="#8c8c46" stroke="#5a6633" stroke-width="1.2"/><circle cx="524.4" cy="237.3" r="3.2" fill="none" stroke="#d2d288" stroke-width="1"/><circle cx="525" cy="237.7" r="1.7" fill="#fffdb0"/><circle cx="524.4" cy="237.3" r="6.1" fill="none" stroke="#f00" stroke-width="1"/><circle cx="524.4" cy="237.3" r="2.9" fill="none" stroke="#f00" stroke-width=".8"/><circle cx="562.6" cy="259.2" r="5.2" fill="#8c8c46" stroke="#5a6633" stroke-width="1.2"/><circle cx="562.6" cy="259.2" r="3.2" fill="none" stroke="#d2d288" stroke-width="1"/><circle cx="563.2" cy="259.6" r="1.7" fill="#fffdb0"/><circle cx="562.6" cy="259.2" r="6.1" fill="none" stroke="#f00" stroke-width="1"/><circle cx="562.6" cy="259.2" r="2.9" fill="none" stroke="#f00" stroke-width=".8"/><g fill="none" stroke="#f00" stroke-width="1"><path d="M393.5 253.5H407M456.5 196.5V209.5M417.5 316V330M478.5 316V330"/><path d="M430.5 261.5H509.5V274.5H430.5Z" /><path d="M444.5 274.5H493.5V316.500H412L407.500 312V210.500"/><path d="M526.500 210.500V256.500H581.500"/><path d="M538.500 221.500H595.500V271.500H509.500M538.500 221.500V245.500H570M540.500 223.500V243.500H568"/></g></g><g id="leafL"><g filter="url(#emb)"><path d="M 442.8 234.3 C 437.6 230.4 431 228.4 423.2 228.4 C 415.4 230.4 410.9 236.2 410.2 242.8 C 410.9 248.6 416.7 253.2 423.2 254.2 C 426.5 253.8 429.1 252.5 429.1 251.2 C 426.5 249.9 424.5 246.7 426.5 243.4 C 429.1 240.8 435.6 241.2 440.2 244.1 C 443.4 247.3 446 252.5 448 256 L 449.9 250.6 Z" fill="#8a8a46"/></g><g filter="url(#emb)"><path d="M 477.3 210.9 C 483.1 214.1 487.7 219.3 487.3 225.8 L 485.7 228.2 L 490.3 230 L 489.4 235.2 L 492.2 237.3 L 490.9 242.5 L 488.6 244.3 L 498.1 245.6 L 495.9 250.8 L 493.5 254 L 502 257.3 C 505.9 260.3 507.9 265.5 507 269.5 C 505.9 274 501.4 276 497.7 275.1 L 494.8 277.9 C 492.2 281.8 490.3 285.7 490.9 294.8 L 483.1 296.1 C 472.7 290.9 463.6 281.8 457.1 272.7 C 451.9 264.9 448 257.1 444.7 249.9 L 442.8 234.3 L 440.8 224.5 L 448 228.2 L 455.1 231.3 L 456.4 226.9 L 462.3 222.6 L 464.9 221.3 L 467.2 225.8 L 472.7 220.4 C 475.3 217.4 476.9 214.1 477.3 210.9 Z" fill="#8a8a46"/></g><g filter="url(#emb2)" fill="none" stroke="#8a8a46" stroke-linecap="round"><path d="M 477.9 214.1 C 476 225.8 470.1 236.2 468.2 248 C 466.8 259.7 472.7 272.7 488.3 290.9" stroke-width="6"/><path d="M 444.1 229.7 C 451.9 238.9 455.8 248 459.7 257.1 C 463.6 266.2 472.7 280.5 487 293.5" stroke-width="5.500"/><path d="M 488.3 231 C 483.1 238.9 477.9 246.7 475.3 257.1 C 474 263.6 477.9 270.1 483.1 275.3" stroke-width="5"/><path d="M 496.1 248 C 489.6 253.2 484.4 258.4 483.1 263.6 M 501.4 261 C 496.1 261 493.5 263.6 494.8 268.8" stroke-width="4"/></g><path d="M 442.8 234.3 C 437.6 230.4 431 228.4 423.2 228.4 C 415.4 230.4 410.9 236.2 410.2 242.8 C 410.9 248.6 416.7 253.2 423.2 254.2 C 426.5 253.8 429.1 252.5 429.1 251.2 C 426.5 249.9 424.5 246.7 426.5 243.4 C 429.1 240.8 435.6 241.2 440.2 244.1 C 443.4 247.3 446 252.5 448 256 L 449.9 250.6 Z" fill="none" stroke="#f00" stroke-width="1"/><path d="M 477.3 210.9 C 483.1 214.1 487.7 219.3 487.3 225.8 L 485.7 228.2 L 490.3 230 L 489.4 235.2 L 492.2 237.3 L 490.9 242.5 L 488.6 244.3 L 498.1 245.6 L 495.9 250.8 L 493.5 254 L 502 257.3 C 505.9 260.3 507.9 265.5 507 269.5 C 505.9 274 501.4 276 497.7 275.1 L 494.8 277.9 C 492.2 281.8 490.3 285.7 490.9 294.8 L 483.1 296.1 C 472.7 290.9 463.6 281.8 457.1 272.7 C 451.9 264.9 448 257.1 444.7 249.9 L 442.8 234.3 L 440.8 224.5 L 448 228.2 L 455.1 231.3 L 456.4 226.9 L 462.3 222.6 L 464.9 221.3 L 467.2 225.8 L 472.7 220.4 C 475.3 217.4 476.9 214.1 477.3 210.9 Z" fill="none" stroke="#f00" stroke-width="1" stroke-linejoin="round"/><path d="M 445.4 253.8 C 450.6 266.2 461 280.5 483.1 298.8 M 448 255.8 C 457.1 267.5 470.1 280.5 490.3 289.6 M 454.5 257.1 C 462.3 266.2 472.7 275.3 489.6 284.4 M 466.2 237.6 C 466.2 250.6 470.1 263.6 483.1 277.9 M 457.1 234.3 C 456.4 238.9 459.7 242.8 461.6 240.2 C 462.3 236.9 459.7 234.3 457.1 234.3" fill="none" stroke="#f00" stroke-width=".9"/></g><g id="leafR"><g filter="url(#emb)"><path d="M 772.2 234.3 C 777.4 230.4 784 228.4 791.8 228.4 C 799.6 230.4 804.1 236.2 804.8 242.8 C 804.1 248.6 798.3 253.2 791.8 254.2 C 788.5 253.8 785.9 252.5 785.9 251.2 C 788.5 249.9 790.5 246.7 788.5 243.4 C 785.9 240.8 779.4 241.2 774.8 244.1 C 771.6 247.3 769 252.5 767 256 L 765.1 250.6 Z" fill="#8a8a46"/></g><g filter="url(#emb)"><path d="M 737.7 210.9 C 731.9 214.1 727.3 219.3 727.7 225.8 L 729.3 228.2 L 724.7 230 L 725.6 235.2 L 722.8 237.3 L 724.1 242.5 L 726.4 244.3 L 716.9 245.6 L 719.1 250.8 L 721.5 254 L 713 257.3 C 709.1 260.3 707.1 265.5 708 269.5 C 709.1 274 713.6 276 717.3 275.1 L 720.2 277.9 C 722.8 281.8 724.7 285.7 724.1 294.8 L 731.9 296.1 C 742.3 290.9 751.4 281.8 757.9 272.7 C 763.1 264.9 767 257.1 770.3 249.9 L 772.2 234.3 L 774.2 224.5 L 767 228.2 L 759.9 231.3 L 758.6 226.9 L 752.7 222.6 L 750.1 221.3 L 747.8 225.8 L 742.3 220.4 C 739.7 217.4 738.1 214.1 737.7 210.9 Z" fill="#8a8a46"/></g><g filter="url(#emb2)" fill="none" stroke="#8a8a46" stroke-linecap="round"><path d="M 737.1 214.1 C 739 225.8 744.9 236.2 746.8 248 C 748.2 259.7 742.3 272.7 726.7 290.9" stroke-width="6"/><path d="M 770.9 229.7 C 763.1 238.9 759.2 248 755.3 257.1 C 751.4 266.2 742.3 280.5 728 293.5" stroke-width="5.500"/><path d="M 726.7 231 C 731.9 238.9 737.1 246.7 739.7 257.1 C 741 263.6 737.1 270.1 731.9 275.3" stroke-width="5"/><path d="M 718.9 248 C 725.4 253.2 730.6 258.4 731.9 263.6 M 713.6 261 C 718.9 261 721.5 263.6 720.2 268.8" stroke-width="4"/></g><path d="M 772.2 234.3 C 777.4 230.4 784 228.4 791.8 228.4 C 799.6 230.4 804.1 236.2 804.8 242.8 C 804.1 248.6 798.3 253.2 791.8 254.2 C 788.5 253.8 785.9 252.5 785.9 251.2 C 788.5 249.9 790.5 246.7 788.5 243.4 C 785.9 240.8 779.4 241.2 774.8 244.1 C 771.6 247.3 769 252.5 767 256 L 765.1 250.6 Z" fill="none" stroke="#f00" stroke-width="1"/><path d="M 737.7 210.9 C 731.9 214.1 727.3 219.3 727.7 225.8 L 729.3 228.2 L 724.7 230 L 725.6 235.2 L 722.8 237.3 L 724.1 242.5 L 726.4 244.3 L 716.9 245.6 L 719.1 250.8 L 721.5 254 L 713 257.3 C 709.1 260.3 707.1 265.5 708 269.5 C 709.1 274 713.6 276 717.3 275.1 L 720.2 277.9 C 722.8 281.8 724.7 285.7 724.1 294.8 L 731.9 296.1 C 742.3 290.9 751.4 281.8 757.9 272.7 C 763.1 264.9 767 257.1 770.3 249.9 L 772.2 234.3 L 774.2 224.5 L 767 228.2 L 759.9 231.3 L 758.6 226.9 L 752.7 222.6 L 750.1 221.3 L 747.8 225.8 L 742.3 220.4 C 739.7 217.4 738.1 214.1 737.7 210.9 Z" fill="none" stroke="#f00" stroke-width="1" stroke-linejoin="round"/><path d="M 769.6 253.8 C 764.4 266.2 754 280.5 731.9 298.8 M 767 255.8 C 757.9 267.5 744.9 280.5 724.7 289.6 M 760.5 257.1 C 752.7 266.2 742.3 275.3 725.4 284.4 M 748.8 237.6 C 748.8 250.6 744.9 263.6 731.9 277.9 M 757.9 234.3 C 758.6 238.9 755.3 242.8 753.4 240.2 C 752.7 236.9 755.3 234.3 757.9 234.3" fill="none" stroke="#f00" stroke-width=".9"/></g></defs><rect x="79" y="121" width="157.500" height="21.600" fill="#fffdb0"/><rect x="79" y="121" width="126.500" height="6.500" fill="#8c8c46"/><path d="M79 122H205M79 127H205.500V121" stroke="#5a6633" stroke-width="1" fill="none"/><path d="M79 124.500H203" stroke="#c8c880" stroke-width="1.200"/><path d="M135 123H203V126" stroke="#e8e8a0" stroke-width="1" fill="none"/><g fill="none" stroke="#f00" stroke-width="1" shape-rendering="crispEdges"><path d="M79 196.500H155.500"/><path d="M79 213.500L81.500 209.500H149.500L156.500 217V276.500L150.500 284.500H79"/><path d="M79 273.500H142.500L145.500 270.500V223L143 220.500H86.500V246.500H117C121 246.500 120.500 243 120.500 241V238C120.500 235.500 119 234.500 116.500 234.500H107C105 234.500 104.500 236 104.500 237.500C104.500 240 103 240.500 101 240.500H97.500C95 240.500 94.500 239 94.500 237V228C94.500 225 96 223.500 98.500 223.500H125C128 223.500 129.500 225 129.500 228V251.500L123.500 256.500H79" shape-rendering="auto"/><path d="M246 222.500H269M275.500 204V225"/><path d="M607.500 121V535"/></g><g fill="none" shape-rendering="crispEdges"><rect x="127.500" y="578.500" width="48" height="47" stroke="#00a000"/><path d="M123.500 560L127.500 566L131.500 560M127.500 566V578" stroke="#00c000"/><path d="M124.500 588L127.500 579L130.500 588" stroke="#00c000" shape-rendering="auto"/><path d="M164 622.500L175 625.500L164 628.500" stroke="#f00" shape-rendering="auto"/><path d="M184 619.500L190.500 631.500M190.500 619.500L184 631.500" stroke="#f00" shape-rendering="auto"/></g><g id="p1"><rect x="380" y="182" width="455.5" height="151" fill="#fffdb0"/><use href="#mod"/><use href="#mod" transform="translate(1215,0) scale(-1,1)"/><use href="#leafL"/><use href="#leafR"/><g filter="url(#emb)"><path d="M 569.6 284.7 L 644.8 284.7 C 646.4 291.5 640.8 298 632.7 301.2 C 629.4 306.1 623 309.3 616.5 308.5 C 613.3 312.5 610 315 607.3 315.4 C 604.5 315 601.3 312.5 598.1 308.5 C 591.6 309.3 585.1 306.1 581.9 301.2 C 573.8 298 568.1 291.5 569.6 284.7 Z" fill="#8a8a46"/></g><g filter="url(#emb2)"><path d="M 584.1 293.9 C 590.6 292.3 600.3 293.1 607.3 298 C 614.2 293.1 623.9 292.3 630.4 293.9 C 627.2 301.2 619.1 306.1 616.5 307.7 C 613.3 311.7 610 313.8 607.3 314.1 C 604.5 313.8 601.3 311.7 598.1 307.7 C 595.5 306.1 587.4 301.2 584.1 293.9 Z" fill="#8a8a46"/></g><path d="M 569.6 284.7 L 644.8 284.7 C 646.4 291.5 640.8 298 632.7 301.2 C 629.4 306.1 623 309.3 616.5 308.5 C 613.3 312.5 610 315 607.3 315.4 C 604.5 315 601.3 312.5 598.1 308.5 C 591.6 309.3 585.1 306.1 581.9 301.2 C 573.8 298 568.1 291.5 569.6 284.7 Z" fill="none" stroke="#f00" stroke-width="1"/><path d="M 576.1 285.8 C 577.7 294.7 587.4 298 597.1 299.6 C 600.3 302.8 603.6 306.1 607.3 307.7 C 611 306.1 614.2 302.8 617.5 299.6 C 627.2 298 636.9 294.7 638.5 285.8 M 590.6 294.7 C 595.5 293.1 601.9 293.9 607.3 298 C 612.6 293.9 619.1 293.1 623.9 294.7" fill="none" stroke="#f00" stroke-width=".8"/><ellipse cx="582.8" cy="287.1" rx="2.2" ry="2.2" fill="#fffdb0" stroke="#f00" stroke-width=".7"/><ellipse cx="597.6" cy="290.2" rx="2.2" ry="2.2" fill="#fffdb0" stroke="#f00" stroke-width=".7"/><ellipse cx="616.8" cy="290.2" rx="2.2" ry="2.2" fill="#fffdb0" stroke="#f00" stroke-width=".7"/><ellipse cx="631.4" cy="287.1" rx="2.2" ry="2.2" fill="#fffdb0" stroke="#f00" stroke-width=".7"/><g fill="none"><path d="M557.4 284V318L563.5 324.7H651.5L657.6 318V284" stroke="#ff0000" stroke-width="11.8" stroke-linejoin="miter" stroke-linecap="butt"/><path d="M519.1 301.2C516.2 306.9 508.9 302.8 509.4 294.7C509.7 288.3 517.8 285.8 524.3 287.4C529.1 288.6 528.3 293.9 529.9 296.3C531.1 298 534 298 537.2 298H555.8" stroke="#ff0000" stroke-width="8.3" stroke-linejoin="round" stroke-linecap="round"/><path d="M540 203H675" stroke="#647038" stroke-width="13" stroke-linejoin="miter" stroke-linecap="butt"/><path d="M557.4 284V318L563.5 324.7H651.5L657.6 318V284" stroke="#647038" stroke-width="10" stroke-linejoin="miter" stroke-linecap="butt"/><path d="M519.1 301.2C516.2 306.9 508.9 302.8 509.4 294.7C509.7 288.3 517.8 285.8 524.3 287.4C529.1 288.6 528.3 293.9 529.9 296.3C531.1 298 534 298 537.2 298H555.8" stroke="#647038" stroke-width="6.5" stroke-linejoin="round" stroke-linecap="round"/><path d="M540 203H675" stroke="#7c823e" stroke-width="11.5" stroke-linejoin="miter" stroke-linecap="butt"/><path d="M557.4 284V318L563.5 324.7H651.5L657.6 318V284" stroke="#7c823e" stroke-width="8.5" stroke-linejoin="miter" stroke-linecap="butt"/><path d="M519.1 301.2C516.2 306.9 508.9 302.8 509.4 294.7C509.7 288.3 517.8 285.8 524.3 287.4C529.1 288.6 528.3 293.9 529.9 296.3C531.1 298 534 298 537.2 298H555.8" stroke="#7c823e" stroke-width="5" stroke-linejoin="round" stroke-linecap="round"/><path d="M540 203H675" stroke="#8f8f48" stroke-width="9.8" stroke-linejoin="miter" stroke-linecap="butt"/><path d="M557.4 284V318L563.5 324.7H651.5L657.6 318V284" stroke="#8f8f48" stroke-width="6.8" stroke-linejoin="round" stroke-linecap="butt"/><path d="M519.1 301.2C516.2 306.9 508.9 302.8 509.4 294.7C509.7 288.3 517.8 285.8 524.3 287.4C529.1 288.6 528.3 293.9 529.9 296.3C531.1 298 534 298 537.2 298H555.8" stroke="#8f8f48" stroke-width="3.3" stroke-linejoin="round" stroke-linecap="round"/><path d="M540 203H675" stroke="#9e9e54" stroke-width="4.9" stroke-linejoin="round" stroke-linecap="butt"/><path d="M557.4 284V318L563.5 324.7H651.5L657.6 318V284" stroke="#9e9e54" stroke-width="3.8" stroke-linejoin="round" stroke-linecap="butt"/><path d="M519.1 301.2C516.2 306.9 508.9 302.8 509.4 294.7C509.7 288.3 517.8 285.8 524.3 287.4C529.1 288.6 528.3 293.9 529.9 296.3C531.1 298 534 298 537.2 298H555.8" stroke="#9e9e54" stroke-width="2.5" stroke-linejoin="round" stroke-linecap="round"/><path d="M540 203H675" stroke="#b4b46a" stroke-width="3.4" stroke-linejoin="round" stroke-linecap="butt"/><path d="M557.4 284V318L563.5 324.7H651.5L657.6 318V284" stroke="#b4b46a" stroke-width="2.6" stroke-linejoin="round" stroke-linecap="butt"/><path d="M519.1 301.2C516.2 306.9 508.9 302.8 509.4 294.7C509.7 288.3 517.8 285.8 524.3 287.4C529.1 288.6 528.3 293.9 529.9 296.3C531.1 298 534 298 537.2 298H555.8" stroke="#b4b46a" stroke-width="1.7" stroke-linejoin="round" stroke-linecap="round"/><path d="M540 203H675" stroke="#d6d68c" stroke-width="2.1" stroke-linejoin="round" stroke-linecap="butt"/><path d="M557.4 284V318L563.5 324.7H651.5L657.6 318V284" stroke="#d6d68c" stroke-width="1.6" stroke-linejoin="round" stroke-linecap="butt"/><path d="M519.1 301.2C516.2 306.9 508.9 302.8 509.4 294.7C509.7 288.3 517.8 285.8 524.3 287.4C529.1 288.6 528.3 293.9 529.9 296.3C531.1 298 534 298 537.2 298H555.8" stroke="#d6d68c" stroke-width="1" stroke-linejoin="round" stroke-linecap="round"/><path d="M540 203H675" stroke="#f4f4a8" stroke-width="1" stroke-linejoin="round" stroke-linecap="butt"/><path d="M557.4 284V318L563.5 324.7H651.5L657.6 318V284" stroke="#f4f4a8" stroke-width="0.8" stroke-linejoin="round" stroke-linecap="butt"/><path d="M519.1 301.2C516.2 306.9 508.9 302.8 509.4 294.7C509.7 288.3 517.8 285.8 524.3 287.4C529.1 288.6 528.3 293.9 529.9 296.3C531.1 298 534 298 537.2 298H555.8" stroke="#f4f4a8" stroke-width="0.5" stroke-linejoin="round" stroke-linecap="round"/></g><g id="h1"><path d="M519.1 301.2C516.2 306.9 508.9 302.8 509.4 294.7C509.7 288.3 517.8 285.8 524.3 287.4C529.1 288.6 528.3 293.9 529.9 296.3C531.1 298 534 298 537.2 298H555.8" fill="none"/><circle cx="547.7" cy="286.6" r="5" fill="#8c8c46" stroke="#5a6633" stroke-width="1.2"/><circle cx="547.7" cy="286.6" r="3.1" fill="none" stroke="#d2d288" stroke-width="1"/><circle cx="548.3" cy="287" r="1.7" fill="#fffdb0"/><circle cx="547.7" cy="286.6" r="5.9" fill="none" stroke="#f00" stroke-width="1"/><circle cx="547.7" cy="286.6" r="2.8" fill="none" stroke="#f00" stroke-width=".8"/><circle cx="547.7" cy="309.3" r="5" fill="#8c8c46" stroke="#5a6633" stroke-width="1.2"/><circle cx="547.7" cy="309.3" r="3.1" fill="none" stroke="#d2d288" stroke-width="1"/><circle cx="548.3" cy="309.7" r="1.7" fill="#fffdb0"/><circle cx="547.7" cy="309.3" r="5.9" fill="none" stroke="#f00" stroke-width="1"/><circle cx="547.7" cy="309.3" r="2.8" fill="none" stroke="#f00" stroke-width=".8"/></g><use href="#h1" transform="translate(1215,0) scale(-1,1)"/><g transform="translate(1215,0) scale(-1,1)" fill="none"><path d="M519.1 301.2C516.2 306.9 508.9 302.8 509.4 294.7C509.7 288.3 517.8 285.8 524.3 287.4C529.1 288.6 528.3 293.9 529.9 296.3C531.1 298 534 298 537.2 298H555.8" stroke="#ff0000" stroke-width="8.3" stroke-linejoin="round" stroke-linecap="round"/><path d="M519.1 301.2C516.2 306.9 508.9 302.8 509.4 294.7C509.7 288.3 517.8 285.8 524.3 287.4C529.1 288.6 528.3 293.9 529.9 296.3C531.1 298 534 298 537.2 298H555.8" stroke="#647038" stroke-width="6.5" stroke-linejoin="round" stroke-linecap="round"/><path d="M519.1 301.2C516.2 306.9 508.9 302.8 509.4 294.7C509.7 288.3 517.8 285.8 524.3 287.4C529.1 288.6 528.3 293.9 529.9 296.3C531.1 298 534 298 537.2 298H555.8" stroke="#7c823e" stroke-width="5" stroke-linejoin="round" stroke-linecap="round"/><path d="M519.1 301.2C516.2 306.9 508.9 302.8 509.4 294.7C509.7 288.3 517.8 285.8 524.3 287.4C529.1 288.6 528.3 293.9 529.9 296.3C531.1 298 534 298 537.2 298H555.8" stroke="#8f8f48" stroke-width="3.3" stroke-linejoin="round" stroke-linecap="round"/><path d="M519.1 301.2C516.2 306.9 508.9 302.8 509.4 294.7C509.7 288.3 517.8 285.8 524.3 287.4C529.1 288.6 528.3 293.9 529.9 296.3C531.1 298 534 298 537.2 298H555.8" stroke="#9e9e54" stroke-width="2.5" stroke-linejoin="round" stroke-linecap="round"/><path d="M519.1 301.2C516.2 306.9 508.9 302.8 509.4 294.7C509.7 288.3 517.8 285.8 524.3 287.4C529.1 288.6 528.3 293.9 529.9 296.3C531.1 298 534 298 537.2 298H555.8" stroke="#b4b46a" stroke-width="1.7" stroke-linejoin="round" stroke-linecap="round"/><path d="M519.1 301.2C516.2 306.9 508.9 302.8 509.4 294.7C509.7 288.3 517.8 285.8 524.3 287.4C529.1 288.6 528.3 293.9 529.9 296.3C531.1 298 534 298 537.2 298H555.8" stroke="#d6d68c" stroke-width="1" stroke-linejoin="round" stroke-linecap="round"/><path d="M519.1 301.2C516.2 306.9 508.9 302.8 509.4 294.7C509.7 288.3 517.8 285.8 524.3 287.4C529.1 288.6 528.3 293.9 529.9 296.3C531.1 298 534 298 537.2 298H555.8" stroke="#f4f4a8" stroke-width="0.5" stroke-linejoin="round" stroke-linecap="round"/></g><g fill="none" stroke="#f00" stroke-width="1"><rect x="370.5" y="173.5" width="474" height="158"/><rect x="393.5" y="196.5" width="428" height="134"/><path d="M407.5 209.5H807.5"/><path d="M551.5 277.5V323.500M563.5 285V318.500H651.5V285M663.5 277.5V323.500M546 285.500H570M645 285.500H669"/></g></g><g id="p2"><rect x="427" y="378" width="562" height="151.5" fill="#fffdb0"/><g id="p2l"><use href="#mod" transform="translate(47.3,195.3)"/><path d="M587.3 500C581.7 506.8 572.6 500 574.9 492C576 485.2 586.2 483 593 486.4C598.7 488.6 596.4 494.300 602.1 496.400H636" stroke="#ff0000" stroke-width="10.3" stroke-linejoin="round" stroke-linecap="round" fill="none"/><path d="M587.3 500C581.7 506.8 572.6 500 574.9 492C576 485.2 586.2 483 593 486.4C598.7 488.6 596.4 494.300 602.1 496.400H636" stroke="#647038" stroke-width="8.5" stroke-linejoin="round" stroke-linecap="round" fill="none"/><path d="M587.3 500C581.7 506.8 572.6 500 574.9 492C576 485.2 586.2 483 593 486.4C598.7 488.6 596.4 494.300 602.1 496.400H636" stroke="#7c823e" stroke-width="7" stroke-linejoin="round" stroke-linecap="round" fill="none"/><path d="M587.3 500C581.7 506.8 572.6 500 574.9 492C576 485.2 586.2 483 593 486.4C598.7 488.6 596.4 494.300 602.1 496.400H636" stroke="#8f8f48" stroke-width="5.3" stroke-linejoin="round" stroke-linecap="round" fill="none"/><path d="M587.3 500C581.7 506.8 572.6 500 574.9 492C576 485.2 586.2 483 593 486.4C598.7 488.6 596.4 494.300 602.1 496.400H636" stroke="#9e9e54" stroke-width="3.2" stroke-linejoin="round" stroke-linecap="round" fill="none"/><path d="M587.3 500C581.7 506.8 572.6 500 574.9 492C576 485.2 586.2 483 593 486.4C598.7 488.6 596.4 494.300 602.1 496.400H636" stroke="#b4b46a" stroke-width="2.2" stroke-linejoin="round" stroke-linecap="round" fill="none"/><path d="M587.3 500C581.7 506.8 572.6 500 574.9 492C576 485.2 586.2 483 593 486.4C598.7 488.6 596.4 494.300 602.1 496.400H636" stroke="#d6d68c" stroke-width="1.4" stroke-linejoin="round" stroke-linecap="round" fill="none"/><path d="M587.3 500C581.7 506.8 572.6 500 574.9 492C576 485.2 586.2 483 593 486.4C598.7 488.6 596.4 494.300 602.1 496.400H636" stroke="#f4f4a8" stroke-width="0.7" stroke-linejoin="round" stroke-linecap="round" fill="none"/><circle cx="625.6" cy="505" r="6.2" fill="none" stroke="#5a6633" stroke-width="5.4"/><circle cx="625.6" cy="505" r="6.2" fill="none" stroke="#8c8c46" stroke-width="3.4"/><circle cx="625.6" cy="505" r="6.2" fill="none" stroke="#d2d288" stroke-width="1"/><circle cx="625.6" cy="505" r="2" fill="#8c8c46"/><circle cx="625.6" cy="505" r="9.3" fill="none" stroke="#f00" stroke-width="1"/><circle cx="625.6" cy="505" r="5" fill="none" stroke="#f00" stroke-width=".8"/></g><use href="#p2l" transform="translate(1416,0) scale(-1,1)"/><use href="#leafL" transform="translate(47.3,195.3)"/><use href="#leafR" transform="translate(153.7,195.3)"/><g filter="url(#emb)"><path d="M 653.7 405.5 L 762.2 405.5 C 763.1 414.3 761.2 424.1 752.4 439.7 C 752.4 449.5 744.6 461.2 734.8 462.2 C 727 471 717.2 476.8 708.1 477.2 C 698.9 476.8 689.1 471 681.3 462.2 C 671.5 461.2 663.7 449.5 663.7 439.7 C 654.9 424.1 653 414.3 653.7 405.5 Z" fill="#8a8a46"/></g><g filter="url(#emb)"><path d="M 664.5 429.9 C 674.2 441.7 686 439.7 691.8 431.9 C 697.7 443.6 718.4 443.6 724.3 431.9 C 730.1 439.7 741.9 441.7 751.6 429.9 C 753.4 443.6 744.6 460.2 734.8 461.6 C 727 470 717.2 475.3 708.1 475.9 C 698.9 475.3 689.1 470 681.3 461.6 C 671.5 460.2 662.7 443.6 664.5 429.9 Z" fill="#8a8a46"/></g><g filter="url(#emb)"><path d="M 670.3 445.6 C 678.2 459.2 691.8 457.3 697.7 451.4 C 703.6 457.3 712.5 457.3 718.4 451.4 C 724.3 457.3 737.9 459.2 745.8 445.6 C 744.6 455.3 738.7 460.2 734 461.6 C 727 469.4 717.2 474.5 708.1 474.9 C 698.9 474.5 689.1 469.4 682.1 461.6 C 677.4 460.2 671.5 455.3 670.3 445.6 Z" fill="#8a8a46"/></g><g filter="url(#emb2)"><path d="M 662.5 406.5 C 662.5 418.2 666.4 424.1 678.2 422.1 C 684 420.2 686 414.3 686 407.5 Z M 753.4 406.5 C 753.4 418.2 749.5 424.1 737.7 422.1 C 731.9 420.2 729.9 414.3 729.9 407.5 Z M 691.8 408.4 C 687.9 422.1 697.7 431.9 706.5 427 L 708.1 408.4 Z M 724.3 408.4 C 728.2 422.1 718.4 431.9 709.6 427 L 708.1 408.4 Z" fill="#8a8a46"/></g><path d="M 662.5 406.5 C 662.5 418.2 666.4 424.1 678.2 422.1 C 684 420.2 686 414.3 686 407.5 M 753.4 406.5 C 753.4 418.2 749.5 424.1 737.7 422.1 C 731.9 420.2 729.9 414.3 729.9 407.5 M 664.5 429.9 C 674.2 441.7 686 439.7 691.8 431.9 C 697.7 443.6 718.4 443.6 724.3 431.9 C 730.1 439.7 741.9 441.7 751.6 429.9 M 670.3 445.6 C 678.2 459.2 691.8 457.3 697.7 451.4 C 703.6 457.3 712.5 457.3 718.4 451.4 C 724.3 457.3 737.9 459.2 745.8 445.6 M 682.1 462.2 C 691.8 463.2 701.6 459.2 708.1 453.4 C 714.5 459.2 724.3 463.2 734 462.2 M 691.8 408.4 C 687.9 422.1 697.7 431.9 706.5 427 M 724.3 408.4 C 728.2 422.1 718.4 431.9 709.6 427" fill="none" stroke="#f00" stroke-width=".8"/><ellipse cx="677.2" cy="411.4" rx="3.2" ry="4.6" fill="#fffdb0" stroke="#f00" stroke-width=".7"/><ellipse cx="739.1" cy="411.4" rx="3.2" ry="4.6" fill="#fffdb0" stroke="#f00" stroke-width=".7"/><ellipse cx="695.7" cy="418.2" rx="2.8" ry="4.2" fill="#fffdb0" stroke="#f00" stroke-width=".7"/><ellipse cx="720.2" cy="418.2" rx="2.8" ry="4.2" fill="#fffdb0" stroke="#f00" stroke-width=".7"/><g fill="none"><path d="M638 480V515L644.5 521.3H771.5L778 515V480" stroke="#ff0000" stroke-width="11.8" stroke-linejoin="miter" stroke-linecap="butt"/><path d="M673.8 525V489.5Q673.8 483.2 680 483.2H736.5Q743 483.2 743 489.5V525" stroke="#ff0000" stroke-width="12.3" stroke-linejoin="round" stroke-linecap="butt"/><path d="M0 0" stroke="#ff0000" stroke-width="10.3" stroke-linejoin="round" stroke-linecap="round"/><path d="M690 398.3H726" stroke="#647038" stroke-width="13" stroke-linejoin="miter" stroke-linecap="butt"/><path d="M638 480V515L644.5 521.3H771.5L778 515V480" stroke="#647038" stroke-width="10" stroke-linejoin="miter" stroke-linecap="butt"/><path d="M673.8 525V489.5Q673.8 483.2 680 483.2H736.5Q743 483.2 743 489.5V525" stroke="#647038" stroke-width="10.5" stroke-linejoin="round" stroke-linecap="butt"/><path d="M0 0" stroke="#647038" stroke-width="8.5" stroke-linejoin="round" stroke-linecap="round"/><path d="M690 398.3H726" stroke="#7c823e" stroke-width="11.5" stroke-linejoin="miter" stroke-linecap="butt"/><path d="M638 480V515L644.5 521.3H771.5L778 515V480" stroke="#7c823e" stroke-width="8.5" stroke-linejoin="miter" stroke-linecap="butt"/><path d="M673.8 525V489.5Q673.8 483.2 680 483.2H736.5Q743 483.2 743 489.5V525" stroke="#7c823e" stroke-width="9" stroke-linejoin="round" stroke-linecap="butt"/><path d="M0 0" stroke="#7c823e" stroke-width="7" stroke-linejoin="round" stroke-linecap="round"/><path d="M690 398.3H726" stroke="#8f8f48" stroke-width="9.8" stroke-linejoin="miter" stroke-linecap="butt"/><path d="M638 480V515L644.5 521.3H771.5L778 515V480" stroke="#8f8f48" stroke-width="6.8" stroke-linejoin="round" stroke-linecap="butt"/><path d="M673.8 525V489.5Q673.8 483.2 680 483.2H736.5Q743 483.2 743 489.5V525" stroke="#8f8f48" stroke-width="7.3" stroke-linejoin="round" stroke-linecap="butt"/><path d="M0 0" stroke="#8f8f48" stroke-width="5.3" stroke-linejoin="round" stroke-linecap="round"/><path d="M690 398.3H726" stroke="#9e9e54" stroke-width="4.9" stroke-linejoin="round" stroke-linecap="butt"/><path d="M638 480V515L644.5 521.3H771.5L778 515V480" stroke="#9e9e54" stroke-width="3.8" stroke-linejoin="round" stroke-linecap="butt"/><path d="M673.8 525V489.5Q673.8 483.2 680 483.2H736.5Q743 483.2 743 489.5V525" stroke="#9e9e54" stroke-width="4" stroke-linejoin="round" stroke-linecap="butt"/><path d="M0 0" stroke="#9e9e54" stroke-width="3.2" stroke-linejoin="round" stroke-linecap="round"/><path d="M690 398.3H726" stroke="#b4b46a" stroke-width="3.4" stroke-linejoin="round" stroke-linecap="butt"/><path d="M638 480V515L644.5 521.3H771.5L778 515V480" stroke="#b4b46a" stroke-width="2.6" stroke-linejoin="round" stroke-linecap="butt"/><path d="M673.8 525V489.5Q673.8 483.2 680 483.2H736.5Q743 483.2 743 489.5V525" stroke="#b4b46a" stroke-width="2.7" stroke-linejoin="round" stroke-linecap="butt"/><path d="M0 0" stroke="#b4b46a" stroke-width="2.2" stroke-linejoin="round" stroke-linecap="round"/><path d="M690 398.3H726" stroke="#d6d68c" stroke-width="2.1" stroke-linejoin="round" stroke-linecap="butt"/><path d="M638 480V515L644.5 521.3H771.5L778 515V480" stroke="#d6d68c" stroke-width="1.6" stroke-linejoin="round" stroke-linecap="butt"/><path d="M673.8 525V489.5Q673.8 483.2 680 483.2H736.5Q743 483.2 743 489.5V525" stroke="#d6d68c" stroke-width="1.7" stroke-linejoin="round" stroke-linecap="butt"/><path d="M0 0" stroke="#d6d68c" stroke-width="1.4" stroke-linejoin="round" stroke-linecap="round"/><path d="M690 398.3H726" stroke="#f4f4a8" stroke-width="1" stroke-linejoin="round" stroke-linecap="butt"/><path d="M638 480V515L644.5 521.3H771.5L778 515V480" stroke="#f4f4a8" stroke-width="0.8" stroke-linejoin="round" stroke-linecap="butt"/><path d="M673.8 525V489.5Q673.8 483.2 680 483.2H736.5Q743 483.2 743 489.5V525" stroke="#f4f4a8" stroke-width="0.8" stroke-linejoin="round" stroke-linecap="butt"/><path d="M0 0" stroke="#f4f4a8" stroke-width="0.7" stroke-linejoin="round" stroke-linecap="round"/></g><g fill="none" stroke="#f00" stroke-width="1"><rect x="418.5" y="369.5" width="579" height="158"/><rect x="440.5" y="392.5" width="535" height="133.5"/><path d="M454.5 405.500H961.5M504.500 392.500V405.500M625.500 392.500V405.500M790.500 392.500V405.500M911.500 392.500V405.500"/><path d="M632.5 470V521M644.5 478V514.500L648 518.500H768L771.5 514.500V478M783.5 470V521M679.500 524.500V492Q679.500 489 683 489H733.500Q737 489 737 492V524.500M668.500 516H679.500V526H668.500ZM737.500 516H748.500V526H737.500Z"/><path d="M569.500 469.500V481M579.500 469.500V481M622.500 469.500V481M846.500 469.500V481M836.500 469.500V481M793.500 469.500V481"/></g></g><g id="p3"><rect x="205.5" y="336" width="106" height="213.5" fill="#fffdb0"/><g fill="none"><path d="M212.4 550V343H302.2V380C302.2 392 294 398.5 283 398.5" stroke="#ff0000" stroke-width="14.8" stroke-linejoin="miter" stroke-linecap="butt"/><path d="M232 420V372.5L238 366.3H267.5Q273.3 366.3 273.3 372V402" stroke="#ff0000" stroke-width="13.8" stroke-linejoin="round" stroke-linecap="round"/><path d="M206 426.5H266" stroke="#ff0000" stroke-width="14.3" stroke-linejoin="round" stroke-linecap="butt"/><path d="M265.5 426.5V478Q265.5 484 259.5 484H247" stroke="#ff0000" stroke-width="14.3" stroke-linejoin="round" stroke-linecap="round"/><path d="M252.2 366V357.5" stroke="#ff0000" stroke-width="13.3" stroke-linejoin="round" stroke-linecap="round"/><path d="M225.5 387H232" stroke="#ff0000" stroke-width="11.8" stroke-linejoin="round" stroke-linecap="round"/><path d="M227.6 481V510C227.6 521 240 521 239.5 510" stroke="#ff0000" stroke-width="12.3" stroke-linejoin="round" stroke-linecap="round"/><path d="M212.4 550V343H302.2V380C302.2 392 294 398.5 283 398.5" stroke="#647038" stroke-width="13" stroke-linejoin="miter" stroke-linecap="butt"/><path d="M232 420V372.5L238 366.3H267.5Q273.3 366.3 273.3 372V402" stroke="#647038" stroke-width="12" stroke-linejoin="round" stroke-linecap="round"/><path d="M206 426.5H266" stroke="#647038" stroke-width="12.5" stroke-linejoin="round" stroke-linecap="butt"/><path d="M265.5 426.5V478Q265.5 484 259.5 484H247" stroke="#647038" stroke-width="12.5" stroke-linejoin="round" stroke-linecap="round"/><path d="M252.2 366V357.5" stroke="#647038" stroke-width="11.5" stroke-linejoin="round" stroke-linecap="round"/><path d="M225.5 387H232" stroke="#647038" stroke-width="10" stroke-linejoin="round" stroke-linecap="round"/><path d="M227.6 481V510C227.6 521 240 521 239.5 510" stroke="#647038" stroke-width="10.5" stroke-linejoin="round" stroke-linecap="round"/><path d="M212.4 550V343H302.2V380C302.2 392 294 398.5 283 398.5" stroke="#7c823e" stroke-width="11.5" stroke-linejoin="miter" stroke-linecap="butt"/><path d="M232 420V372.5L238 366.3H267.5Q273.3 366.3 273.3 372V402" stroke="#7c823e" stroke-width="10.5" stroke-linejoin="round" stroke-linecap="round"/><path d="M206 426.5H266" stroke="#7c823e" stroke-width="11" stroke-linejoin="round" stroke-linecap="butt"/><path d="M265.5 426.5V478Q265.5 484 259.5 484H247" stroke="#7c823e" stroke-width="11" stroke-linejoin="round" stroke-linecap="round"/><path d="M252.2 366V357.5" stroke="#7c823e" stroke-width="10" stroke-linejoin="round" stroke-linecap="round"/><path d="M225.5 387H232" stroke="#7c823e" stroke-width="8.5" stroke-linejoin="round" stroke-linecap="round"/><path d="M227.6 481V510C227.6 521 240 521 239.5 510" stroke="#7c823e" stroke-width="9" stroke-linejoin="round" stroke-linecap="round"/><path d="M212.4 550V343H302.2V380C302.2 392 294 398.5 283 398.5" stroke="#8f8f48" stroke-width="9.8" stroke-linejoin="round" stroke-linecap="butt"/><path d="M232 420V372.5L238 366.3H267.5Q273.3 366.3 273.3 372V402" stroke="#8f8f48" stroke-width="8.8" stroke-linejoin="round" stroke-linecap="round"/><path d="M206 426.5H266" stroke="#8f8f48" stroke-width="9.3" stroke-linejoin="round" stroke-linecap="butt"/><path d="M265.5 426.5V478Q265.5 484 259.5 484H247" stroke="#8f8f48" stroke-width="9.3" stroke-linejoin="round" stroke-linecap="round"/><path d="M252.2 366V357.5" stroke="#8f8f48" stroke-width="8.3" stroke-linejoin="round" stroke-linecap="round"/><path d="M225.5 387H232" stroke="#8f8f48" stroke-width="6.8" stroke-linejoin="round" stroke-linecap="round"/><path d="M227.6 481V510C227.6 521 240 521 239.5 510" stroke="#8f8f48" stroke-width="7.3" stroke-linejoin="round" stroke-linecap="round"/><path d="M212.4 550V343H302.2V380C302.2 392 294 398.5 283 398.5" stroke="#9e9e54" stroke-width="4.9" stroke-linejoin="round" stroke-linecap="butt"/><path d="M232 420V372.5L238 366.3H267.5Q273.3 366.3 273.3 372V402" stroke="#9e9e54" stroke-width="4.6" stroke-linejoin="round" stroke-linecap="round"/><path d="M206 426.5H266" stroke="#9e9e54" stroke-width="4.8" stroke-linejoin="round" stroke-linecap="butt"/><path d="M265.5 426.5V478Q265.5 484 259.5 484H247" stroke="#9e9e54" stroke-width="4.8" stroke-linejoin="round" stroke-linecap="round"/><path d="M252.2 366V357.5" stroke="#9e9e54" stroke-width="4.4" stroke-linejoin="round" stroke-linecap="round"/><path d="M225.5 387H232" stroke="#9e9e54" stroke-width="3.8" stroke-linejoin="round" stroke-linecap="round"/><path d="M227.6 481V510C227.6 521 240 521 239.5 510" stroke="#9e9e54" stroke-width="4" stroke-linejoin="round" stroke-linecap="round"/><path d="M212.4 550V343H302.2V380C302.2 392 294 398.5 283 398.5" stroke="#b4b46a" stroke-width="3.4" stroke-linejoin="round" stroke-linecap="butt"/><path d="M232 420V372.5L238 366.3H267.5Q273.3 366.3 273.3 372V402" stroke="#b4b46a" stroke-width="3.1" stroke-linejoin="round" stroke-linecap="round"/><path d="M206 426.5H266" stroke="#b4b46a" stroke-width="3.2" stroke-linejoin="round" stroke-linecap="butt"/><path d="M265.5 426.5V478Q265.5 484 259.5 484H247" stroke="#b4b46a" stroke-width="3.2" stroke-linejoin="round" stroke-linecap="round"/><path d="M252.2 366V357.5" stroke="#b4b46a" stroke-width="3" stroke-linejoin="round" stroke-linecap="round"/><path d="M225.5 387H232" stroke="#b4b46a" stroke-width="2.6" stroke-linejoin="round" stroke-linecap="round"/><path d="M227.6 481V510C227.6 521 240 521 239.5 510" stroke="#b4b46a" stroke-width="2.7" stroke-linejoin="round" stroke-linecap="round"/><path d="M212.4 550V343H302.2V380C302.2 392 294 398.5 283 398.5" stroke="#d6d68c" stroke-width="2.1" stroke-linejoin="round" stroke-linecap="butt"/><path d="M232 420V372.5L238 366.3H267.5Q273.3 366.3 273.3 372V402" stroke="#d6d68c" stroke-width="1.9" stroke-linejoin="round" stroke-linecap="round"/><path d="M206 426.5H266" stroke="#d6d68c" stroke-width="2" stroke-linejoin="round" stroke-linecap="butt"/><path d="M265.5 426.5V478Q265.5 484 259.5 484H247" stroke="#d6d68c" stroke-width="2" stroke-linejoin="round" stroke-linecap="round"/><path d="M252.2 366V357.5" stroke="#d6d68c" stroke-width="1.8" stroke-linejoin="round" stroke-linecap="round"/><path d="M225.5 387H232" stroke="#d6d68c" stroke-width="1.6" stroke-linejoin="round" stroke-linecap="round"/><path d="M227.6 481V510C227.6 521 240 521 239.5 510" stroke="#d6d68c" stroke-width="1.7" stroke-linejoin="round" stroke-linecap="round"/><path d="M212.4 550V343H302.2V380C302.2 392 294 398.5 283 398.5" stroke="#f4f4a8" stroke-width="1" stroke-linejoin="round" stroke-linecap="butt"/><path d="M232 420V372.5L238 366.3H267.5Q273.3 366.3 273.3 372V402" stroke="#f4f4a8" stroke-width="1" stroke-linejoin="round" stroke-linecap="round"/><path d="M206 426.5H266" stroke="#f4f4a8" stroke-width="1" stroke-linejoin="round" stroke-linecap="butt"/><path d="M265.5 426.5V478Q265.5 484 259.5 484H247" stroke="#f4f4a8" stroke-width="1" stroke-linejoin="round" stroke-linecap="round"/><path d="M252.2 366V357.5" stroke="#f4f4a8" stroke-width="0.9" stroke-linejoin="round" stroke-linecap="round"/><path d="M225.5 387H232" stroke="#f4f4a8" stroke-width="0.8" stroke-linejoin="round" stroke-linecap="round"/><path d="M227.6 481V510C227.6 521 240 521 239.5 510" stroke="#f4f4a8" stroke-width="0.8" stroke-linejoin="round" stroke-linecap="round"/></g><path d="M220.500 508C220 528 214 542 206.300 549.800H220.500Z" fill="#fffdb0"/><path d="M219.300 508C219 528 213.500 541 206 549.500" fill="none" stroke="#647038" stroke-width="1.200"/><g filter="url(#emb)"><path d="M 265.5 378.4 L 256.1 376.9 L 253 381.6 L 246.8 380 L 248.3 386.2 L 243.6 389.4 L 248.3 394.1 L 242.1 398.8 L 246.8 401.9 C 240.5 401.9 235 406.6 235 411.2 C 235 417.5 240.5 421.4 246.8 418.3 C 251.4 415.9 256.1 416.7 262.4 419.8 L 271.8 423.8 L 278 417.5 C 271.8 408.1 267.1 395.6 267.1 380 Z" fill="#8a8a46"/></g><g filter="url(#emb2)"><path d="M 284.2 344.8 C 286.6 353.4 285.8 361.2 284.2 366.7 L 289.7 368.3 C 291.3 371.4 289.7 375.3 286.6 374.5 L 281.9 372.2 L 278 376.9 L 273.3 369.1 C 279.6 361.2 283 353.4 284.2 344.8 Z" fill="#8a8a46"/></g><g filter="url(#emb2)" fill="none" stroke="#8a8a46" stroke-linecap="round"><path d="M 284.2 345.6 C 281.1 356.6 271.8 365.9 267.1 376.9 C 264.7 389.4 268.6 401.9 274.9 414.4 C 279.6 423.8 283 430 281.4 439.4" stroke-width="6"/><path d="M 262.4 381.6 C 259.2 392.5 262.4 405 271.8 419.1 M 251.4 383.1 C 253 392.5 257.7 401.9 265.5 411.2 M 246.8 395.6 C 251.4 400.3 256.1 406.6 262.4 414.4" stroke-width="3.500"/></g><path d="M 265.5 378.4 L 256.1 376.9 L 253 381.6 L 246.8 380 L 248.3 386.2 L 243.6 389.4 L 248.3 394.1 L 242.1 398.8 L 246.8 401.9 C 240.5 401.9 235 406.6 235 411.2 C 235 417.5 240.5 421.4 246.8 418.3 C 251.4 415.9 256.1 416.7 262.4 419.8 L 271.8 423.8 L 278 417.5 C 271.8 408.1 267.1 395.6 267.1 380 Z" fill="none" stroke="#f00" stroke-width="1"/><path d="M 284.2 344.8 C 286.6 353.4 285.8 361.2 284.2 366.7 L 289.7 368.3 C 291.3 371.4 289.7 375.3 286.6 374.5 L 281.9 372.2 L 278 376.9 L 273.3 369.1 C 279.6 361.2 283 353.4 284.2 344.8 Z" fill="none" stroke="#f00" stroke-width="1"/><path d="M 284.2 345.6 C 281.1 356.6 271.8 365.9 267.1 376.9 C 264.7 389.4 268.6 401.9 274.9 414.4 C 279.6 423.8 283 430 281.4 439.4" fill="none" stroke="#f00" stroke-width=".9" transform="translate(3.200,0)"/><g filter="url(#emb2)"><path d="M 245.2 449.1 L 235.8 450.6 L 238.9 456.9 L 229.6 459.2 L 235.8 465.5 L 227.2 470.2 L 234.2 474.1 L 229.6 480.3 L 238.9 481.9 L 243.6 466.2 Z" fill="#8a8a46"/><path d="M 278 436.6 C 262.4 441.2 248.3 445.9 242.1 460 C 238.9 469.4 238.9 481.9 236.6 494.4" fill="none" stroke="#8a8a46" stroke-width="7.500" stroke-linecap="round"/></g><g filter="url(#emb2)"><path d="M 243.6 467.8 C 243.6 458.4 249.9 453 257.7 453 C 263.2 453.4 263.2 460.8 258.5 463.1 C 256.1 463.9 254.2 462.3 254.6 460" fill="none" stroke="#8a8a46" stroke-width="5" stroke-linecap="round"/></g><path d="M 245.2 449.1 L 235.8 450.6 L 238.9 456.9 L 229.6 459.2 L 235.8 465.5 L 227.2 470.2 L 234.2 474.1 L 229.6 480.3 L 238.9 481.9 L 243.6 466.2 Z" fill="none" stroke="#f00" stroke-width="1"/><path d="M 278 436.6 C 262.4 441.2 248.3 445.9 242.1 460 C 238.9 469.4 238.9 481.9 236.6 494.4" fill="none" stroke="#f00" stroke-width=".9" transform="translate(3.500,1)"/><path d="M 278 436.6 C 262.4 441.2 248.3 445.9 242.1 460 C 238.9 469.4 238.9 481.9 236.6 494.4" fill="none" stroke="#f00" stroke-width=".9" transform="translate(-3.500,-1)"/><circle cx="242" cy="360.5" r="4" fill="#8c8c46" stroke="#5a6633" stroke-width="1.2"/><circle cx="242" cy="360.5" r="2.5" fill="none" stroke="#d2d288" stroke-width="1"/><circle cx="242.6" cy="360.9" r="1.4" fill="#fffdb0"/><circle cx="242" cy="360.5" r="4.9" fill="none" stroke="#f00" stroke-width="1"/><circle cx="242" cy="360.5" r="2.3" fill="none" stroke="#f00" stroke-width=".8"/><circle cx="224.9" cy="395.6" r="3.6" fill="#8c8c46" stroke="#5a6633" stroke-width="1.2"/><circle cx="224.9" cy="395.6" r="2.3" fill="none" stroke="#d2d288" stroke-width="1"/><circle cx="225.5" cy="396" r="1.3" fill="#fffdb0"/><circle cx="224.9" cy="395.6" r="4.5" fill="none" stroke="#f00" stroke-width="1"/><circle cx="224.9" cy="395.6" r="2.1" fill="none" stroke="#f00" stroke-width=".8"/><circle cx="223.3" cy="476.4" r="4.600" fill="none" stroke="#8c8c46" stroke-width="4"/><circle cx="223.3" cy="476.4" r="6.500" fill="none" stroke="#f00"/><circle cx="223.3" cy="476.4" r="3" fill="none" stroke="#f00" stroke-width=".8"/><circle cx="220.2" cy="527.2" r="7.200" fill="#8c8c46" stroke="#5a6633" stroke-width="1.400"/><circle cx="221" cy="527.500" r="3" fill="#c8c880"/><circle cx="220.2" cy="527.2" r="8" fill="none" stroke="#f00"/><circle cx="220.2" cy="527.2" r="5.300" fill="none" stroke="#f00" stroke-width=".8"/><rect x="254.500" y="356.500" width="2.500" height="15" fill="none" stroke="#fff" stroke-width="1"/><rect x="225" y="383" width="9" height="2.500" fill="none" stroke="#fff" stroke-width="1"/><g fill="none" stroke="#f00" stroke-width="1"><rect x="183.5" y="335.5" width="128" height="214"/><path d="M205.500 335.500V549.500M310.500 336V549"/><rect x="219.500" y="349.500" width="76" height="70"/><rect x="221.500" y="352.500" width="72" height="64"/><rect x="238.500" y="376.500" width="30" height="43"/><rect x="240.500" y="378.500" width="26" height="39"/><rect x="205.500" y="419.500" width="67" height="14"/><path d="M259.500 421.500H272.500V470M218.500 433.500V549"/><rect x="273.500" y="391.500" width="11" height="14"/><rect x="245.500" y="350.500" width="13" height="21"/><path d="M218.500 476.500H259.500V435M221.500 474.500H257.500V440"/><path d="M309 384.7C302 395 298 406 296 420C292 450 288 470 278 486.6C268 505 255 520 246.8 528.8C235 538 220 546 205.8 550.6"/></g></g><path d="M607.500 121V535" stroke="#f00" stroke-width="1" shape-rendering="crispEdges"/></svg><!--ART-END--></div>
<!--RIGHT-START-->
<!-- RIGHT PANEL -->
<div class="abs" style="left:1185px;top:106px;width:1px;height:570px;background:#fff"></div>
<div class="abs" style="left:1188px;top:106px;width:1px;height:570px;background:#8e8e96"></div><div class="abs" style="left:1189px;top:106px;width:1px;height:570px;background:#c4c4ca"></div>
<div class="abs" style="left:1185px;top:675px;width:175px;height:1px;background:#a0a0a0"></div>
<div class="abs" style="left:1193px;top:116px;width:111px;height:1px;background:#a8a8a8;box-shadow:0 1px 0 #fff,0 3px 0 #a8a8a8,0 4px 0 #fff"></div>
<svg class="abs" style="left:0;top:0" width="1360" height="680" viewBox="0 0 1360 680" shape-rendering="crispEdges">
<rect x="1308.500" y="111.500" width="10" height="10" fill="#f0f0f0" stroke="#fff"/><path d="M1308.500 122.500H1319.500V111.500" fill="none" stroke="#808080"/><rect x="1311.500" y="114.500" width="5" height="5" fill="none" stroke="#000"/><path d="M1311 115.500H1317" stroke="#000"/>
<rect x="1321.500" y="111.500" width="10" height="10" fill="#f0f0f0" stroke="#fff"/><path d="M1321.500 122.500H1332.500V111.500" fill="none" stroke="#808080"/><path d="M1324 114L1330 120M1330 114L1324 120" stroke="#000" stroke-width="1.500" shape-rendering="auto"/>
<!-- tab -->
<path d="M1190.500 288V129.500H1222.500V152.500H1335.500V288" fill="none" stroke="#a0a0a0"/><path d="M1191.500 130.500H1221.500V152" fill="#fcfcfc" stroke="none"/><rect x="1191" y="130" width="31" height="23" fill="#fbfbfb"/>
<path d="M1190 287.500H1336" stroke="#a0a0a0"/><path d="M1190 288.500H1336" stroke="#fff"/>
<path d="M1336.500 129V152" stroke="#c8c8c8"/>
<rect x="1197.500" y="133.500" width="10" height="12" fill="#d8d8d8" stroke="#00008b" stroke-width="1"/>
<g fill="#00008b"><rect x="1195" y="132" width="3" height="3"/><rect x="1206" y="132" width="3" height="3"/><rect x="1195" y="144" width="3" height="3"/><rect x="1206" y="144" width="3" height="3"/></g>
<g fill="#ff0000"><rect x="1201" y="132" width="3" height="3"/><rect x="1201" y="144" width="3" height="3"/><rect x="1195" y="138" width="3" height="3"/><rect x="1206" y="138" width="3" height="3"/></g>
<rect x="1199" y="136" width="7" height="7" fill="#e8e8e8"/>
<!-- palette -->
<rect x="1342" y="106" width="18" height="17" fill="#c8c8c8"/>
<g shape-rendering="auto"><path d="M1347 120L1348.500 115L1354 107.500L1357 109.500L1351.500 117.500Z" fill="#ffff00" stroke="#000" stroke-width="1"/><path d="M1353.500 108L1355 106.500L1358 108.500L1357 110Z" fill="#ff8080" stroke="#000" stroke-width=".8"/><path d="M1347 120L1347.800 117.500L1349.500 118.500Z" fill="#000"/></g>
<rect x="1342.500" y="127.500" width="15" height="14" fill="#fff" stroke="#000"/><path d="M1343 128L1357 141M1357 128L1343 141" stroke="#000" shape-rendering="auto"/>
<path d="M1342 126.500H1359M1359.500 126V143M1342 142.500H1359" stroke="#707070" stroke-dasharray="1 1" fill="none"/>
<rect x="1342" y="146" width="18" height="17" fill="#c8c8c8"/>
<g shape-rendering="auto"><path d="M1346 159L1353 151L1355.500 153.500L1348 160.500Z" fill="#fff" stroke="#000"/><path d="M1352.500 150L1356 146.500L1359 149.500L1356 153.500Z" fill="#000"/><ellipse cx="1348" cy="161" rx="5" ry="1.600" fill="#0000ff"/></g>
<rect x="1343.500" y="167.500" width="14" height="14" fill="#d0d0d0" stroke="#000" stroke-width="1.600"/>
<g><rect x="1345" y="170" width="3" height="3" fill="#000"/><rect x="1349" y="170" width="3" height="3" fill="#fff"/><rect x="1345" y="174" width="3" height="3" fill="#fff"/><rect x="1349" y="174" width="3" height="3" fill="#000"/><rect x="1345" y="178" width="3" height="2" fill="#ffff00"/><rect x="1349" y="178" width="3" height="2" fill="#00ffff"/><rect x="1353" y="178" width="3" height="2" fill="#ff00ff"/></g>
<path d="M1346 179L1355 169.500L1357 171L1348.500 180Z" fill="#ffff00" stroke="#000" stroke-width=".8" shape-rendering="auto"/><rect x="1355" y="168" width="2" height="2" fill="#ff0000"/>
<rect x="1342.500" y="186.500" width="17" height="16" fill="#ffc0cb" stroke="#202020"/>
<rect x="1342.500" y="206.500" width="17" height="16" fill="#f0f0f0" stroke="#d0d0d0"/><path d="M1347 216.500H1355L1351 212.500Z" fill="#b8b8b8" shape-rendering="auto"/>
<rect x="1342.500" y="226.500" width="17" height="16" fill="#f0f0f0" stroke="#d0d0d0"/><path d="M1347 232.500H1355L1351 236.500Z" fill="#000" shape-rendering="auto"/>
<rect x="1342.500" y="246.5" width="17" height="16" fill="#ff0000" stroke="#202020"/><rect x="1342.500" y="266.5" width="17" height="16" fill="#ffff00" stroke="#202020"/><rect x="1342.500" y="286.5" width="17" height="16" fill="#0000ff" stroke="#202020"/><rect x="1342.500" y="306.5" width="17" height="16" fill="#00ff00" stroke="#202020"/><rect x="1342.500" y="326.5" width="17" height="16" fill="#00ffff" stroke="#202020"/><rect x="1342.500" y="346.5" width="17" height="16" fill="#ff00ff" stroke="#202020"/><rect x="1342.500" y="366.5" width="17" height="16" fill="#ffffff" stroke="#202020"/><rect x="1342.500" y="386.5" width="17" height="16" fill="#000000" stroke="#202020"/><rect x="1342.500" y="406.5" width="17" height="16" fill="#c0c0c0" stroke="#202020"/><rect x="1342.500" y="426.5" width="17" height="16" fill="#ff6a1f" stroke="#202020"/><rect x="1342.500" y="446.5" width="17" height="16" fill="#a52a2a" stroke="#202020"/><rect x="1342.500" y="466.5" width="17" height="16" fill="#ffc0cb" stroke="#202020"/><rect x="1342.500" y="486.5" width="17" height="16" fill="#3cb371" stroke="#202020"/><rect x="1342.500" y="506.5" width="17" height="16" fill="#3a9090" stroke="#202020"/><rect x="1342.500" y="526.5" width="17" height="16" fill="#ffd700" stroke="#202020"/><rect x="1342.500" y="546.5" width="17" height="16" fill="#ffb060" stroke="#202020"/><rect x="1342.500" y="566.5" width="17" height="16" fill="#808000" stroke="#202020"/><rect x="1342.500" y="586.5" width="17" height="16" fill="#800000" stroke="#202020"/><rect x="1342.500" y="606.5" width="17" height="16" fill="#00008b" stroke="#202020"/><rect x="1342.500" y="626.5" width="17" height="16" fill="#008000" stroke="#202020"/><rect x="1342.500" y="646.5" width="17" height="16" fill="#008b8b" stroke="#202020"/><rect x="1342.500" y="666.5" width="17" height="9" fill="#8b008b" stroke="#202020"/>
</svg>
<div class="abs lbl" style="left:1196px;top:166px;">Nudge dist.</div>
<div class="abs lbl" style="left:1196px;top:186px;">Angle Incr.</div>
<div class="abs inp" style="left:1268px;top:161px;">200.000</div>
<div class="abs inp" style="left:1268px;top:182px;">90.000</div>
<div class="abs btn foc" style="left:1200px;top:207px;">[Q]Select</div><div class="abs btn" style="left:1267px;top:207px;">[R]Lock</div>
<div class="abs btn" style="left:1200px;top:233px;">[W]Display</div><div class="abs btn" style="left:1267px;top:233px;">[T]Order</div>
<div class="abs btn" style="left:1200px;top:259px;">[E]Layer</div><div class="abs btn" style="left:1267px;top:259px;">[Y]Align</div>
<!-- SCROLLBARS -->
<div class="abs" style="left:1166px;top:121px;width:18px;height:537px;background:#f0f0f0;border-left:1px solid #fff;box-sizing:border-box"></div>
<div class="abs" style="left:1168px;top:326px;width:14px;height:313px;box-sizing:border-box;border:1px solid #979797;border-radius:2px;background:linear-gradient(90deg,#f4f4f4,#e6e6e8 45%,#cfcfd3 55%,#d8d8dc)"></div>
<div class="abs" style="left:1078px;top:658px;width:88px;height:17px;"></div>
<div class="abs" style="left:78px;top:658px;width:1107px;height:17px;background:#f0f0f0;"></div>
<div class="abs" style="left:215px;top:660px;width:932px;height:13px;box-sizing:border-box;border:1px solid #979797;border-radius:2px;background:linear-gradient(180deg,#f4f4f4,#e6e6e8 45%,#cfcfd3 55%,#d8d8dc)"></div>
<svg class="abs" style="left:0;top:0" width="1360" height="680" viewBox="0 0 1360 680">
<path d="M1171 133H1179L1175 129Z" fill="#606060"/><path d="M1171 648H1179L1175 652Z" fill="#404040"/>
<path d="M91 662.500V670.500L87 666.500Z" fill="#404040"/><path d="M1155 662.500V670.500L1159 666.500Z" fill="#404040"/>
<path d="M1172 480.500H1179M1172 482.500H1179M1172 484.500H1179M1172 486.500H1179" stroke="#606060" shape-rendering="crispEdges"/>
<path d="M677.500 663V670M679.500 663V670M681.500 663V670M683.500 663V670" stroke="#606060" shape-rendering="crispEdges"/>
</svg>
<!--RIGHT-END-->
<!--BOTTOM-START-->
<!-- BOTTOM TOOLBAR -->
<div class="abs" style="left:0;top:675px;width:1185px;height:1px;background:#a0a0a0"></div>
<div class="abs" style="left:0;top:676px;width:1360px;height:1px;background:#fff"></div>
<div class="abs" style="left:0;top:706px;width:1360px;height:1px;background:#b0b0b0"></div>
<div class="abs" style="left:0;top:707px;width:1360px;height:1px;background:#fdfdfd"></div>
<svg class="abs" style="left:0;top:676px" width="700" height="32" viewBox="0 676 700 32">
<g shape-rendering="crispEdges" fill="none"><path d="M3.500 678V705M241.500 679V704M306.500 679V704M398.500 679V704M462.500 679V704M526.500 679V704M646.500 678V705" stroke="#a0a0a0"/><path d="M4.500 678V705M242.500 679V704M307.500 679V704M399.500 679V704M463.500 679V704M527.500 679V704M647.500 678V705" stroke="#fff"/></g>
<g fill="#dedede" stroke="#8a8a8a"><rect x="7.500" y="678.500" width="28" height="25" rx="3"/><rect x="65.500" y="678.500" width="28" height="25" rx="3"/><rect x="94.500" y="678.500" width="28" height="25" rx="3"/><rect x="123.500" y="678.500" width="28" height="25" rx="3"/><rect x="152.500" y="678.500" width="28" height="25" rx="3"/><rect x="245.500" y="678.500" width="28" height="25" rx="3"/><rect x="274.500" y="678.500" width="28" height="25" rx="3"/></g>
<g fill="none" stroke="#000" stroke-width="1.100">
<!-- 1 endpoint -->
<path d="M16 695.500L26 685.500"/><circle cx="16" cy="695.500" r="1.800" fill="#00ffff" stroke="#ff0000" stroke-width=".8"/><circle cx="26" cy="685.500" r="1.800" fill="#ff80c0" stroke="#ff0000" stroke-width=".8"/>
<!-- 2 -->
<path d="M42 685.500L52 687.500L55 697M43 696L51 688"/><path d="M58 681L53 686M53 686V683M53 686H56M44 696L49 691M49 691V694M49 691H46" stroke="#0000ff"/><circle cx="52" cy="687.500" r="1.700" fill="#ff0000" stroke="#ff0000" stroke-width=".5"/>
<!-- 3 -->
<path d="M72 685H78C82 685 84.500 689 84.500 697"/><circle cx="82" cy="687.500" r="1.800" fill="#ffff00" stroke="#ff0000" stroke-width=".8"/>
<!-- 4 -->
<path d="M102 697L116 684M103 686L117 695"/><circle cx="109" cy="690.500" r="1.800" fill="#00ffff" stroke="#ff0000" stroke-width=".8"/>
<!-- 5 -->
<path d="M132.500 684.500H137C142 684.500 145 689 145 696"/><path d="M132.500 685V696H145" stroke-dasharray="1 1.500" stroke="#404040"/><circle cx="133" cy="696" r="1.800" fill="#00ffff" stroke="#ff0000" stroke-width=".8"/>
<!-- 6 -->
<path d="M166.500 684L173 690.500L166.500 697L160 690.500Z" stroke-width="1.300"/><g fill="#ffff00" stroke="#ff0000" stroke-width=".8"><circle cx="166.500" cy="684" r="1.600"/><circle cx="173" cy="690.500" r="1.600"/><circle cx="166.500" cy="697" r="1.600"/><circle cx="160" cy="690.500" r="1.600"/></g>
<!-- 7 -->
<path d="M186 695.500H204M193.500 682V695.500"/><path d="M194 691H198V695" stroke-dasharray="1 1" stroke="#606060"/><circle cx="193.500" cy="695.500" r="1.800" fill="#00ffff" stroke="#ff0000" stroke-width=".8"/>
<!-- 8 -->
<path d="M214 688.500L222 685.500L232.500 697M219 682.500C225 686 227 692 226 700"/><circle cx="224" cy="689" r="1.800" fill="#ff00ff" stroke="#ff0000" stroke-width=".8"/>
<!-- 9 -->
<circle cx="259.500" cy="691" r="3.200" fill="#fff" stroke="#00008b" stroke-width="1.300"/><path d="M257.500 689L261.500 693M261.500 689L257.500 693" stroke="#ff0000" stroke-width=".8"/><circle cx="259.500" cy="691" r="1" fill="#00ffff" stroke="none"/>
<!-- 10 -->
<path d="M288.500 682V691.500L282 698M288.500 691.500L295 698"/><circle cx="288.500" cy="691.500" r="1.600" fill="#ff0000" stroke="none"/><path d="M291 682H294L291 685.500H294M279 695L281.500 698M281.500 695L280 699.500M295 694L298 698M298 694L295 698" stroke-width=".8"/>
<!-- diamonds -->
<g><path d="M322 681.500L332.500 689.500L322 700.500L312 691Z M316.500 686L327.500 695M327 685.500L317 696"/><circle cx="320" cy="688" r="1.800" fill="#ff00ff" stroke="#ff0000" stroke-width=".6"/></g>
<g><path d="M351 681.500L361.500 689.500L351 700.500L341 691Z M345.500 686L356.500 695M356 685.500L346 696"/><circle cx="355" cy="685" r="1.800" fill="#ff00ff" stroke="#ff0000" stroke-width=".6"/></g>
<g><path d="M380 681.500L390.500 689.500L380 700.500L370 691Z M374.500 686L385.500 695M385 685.500L375 696"/><circle cx="381" cy="691" r="1.800" fill="#ff00ff" stroke="#ff0000" stroke-width=".6"/></g>
<!-- 14,15 -->
<path d="M413.500 683V691.500H423M411 693.500H423M409 695.500H421M407 697.500H419"/><circle cx="422.500" cy="691.500" r="1.700" fill="#ffff00" stroke="#ff0000" stroke-width=".7"/>
<path d="M442 690.500H453M440 692.500H452M438 694.500H450M436 696.500H448M436 698.500L441 690"/><path d="M454 683L449 688M449 688V685M449 688H452" stroke="#0000ff"/><circle cx="446" cy="690" r="1.700" fill="#ff00ff" stroke="#ff0000" stroke-width=".7"/>
<!-- cursors -->
<path d="M471.500 685V698L474.500 695L477 700L479 699L476.500 694.500H480.500Z" fill="#000"/><path d="M479 683L487 691M487 683L479 691" stroke="#404040" stroke-width=".8"/><circle cx="483" cy="687" r="1.700" fill="#ffc000" stroke="#ff0000" stroke-width=".6"/>
<path d="M500.500 686V699L503.500 696L506 701L508 700L505.500 695.500H509.500Z" fill="#000"/><path d="M508 683.500L515 690.500M515 683.500L508 690.500" stroke="#e00000" stroke-width="2.200"/>
<!-- 18.. -->
<path d="M534 696.500L545 691L552 694L540 700.500Z"/><path d="M543 684V695" /><rect x="541.500" y="682.500" width="3" height="3" fill="#ffff00" stroke="#ff0000" stroke-width=".7"/><circle cx="543" cy="695.500" r="1.700" fill="#ff00ff" stroke="#ff0000" stroke-width=".6"/><path d="M549.500 683V689.500M547.500 687L549.500 690L551.500 687" stroke="#0000ff"/>
<path d="M564 699L581 683"/><rect x="574.500" y="685.500" width="3" height="3" fill="#ffff00" stroke="#ff0000" stroke-width=".7"/><circle cx="567" cy="696.500" r="1.700" fill="#ff00ff" stroke="#ff0000" stroke-width=".6"/><path d="M570 684L564.500 689.500M564.500 689.500V686.500M564.500 689.500H567.500" stroke="#0000ff"/>
<path d="M592.500 684L602 693.500M602 684L592.500 693.500" stroke="#404040" stroke-width=".8"/><circle cx="597" cy="688.500" r="1.700" fill="#ffc000" stroke="#ff0000" stroke-width=".6"/><path d="M600.500 688.500H608.500V700.500H600.500V694" fill="#fff"/><path d="M602 691.500H607M602 693.500H607M602 695.500H607M602 697.500H607" stroke-width=".9"/>
<path d="M623.500 684.500L636.500 698M636.500 684.500L623.500 698" stroke="#e00000" stroke-width="3.200"/>
</g>
</svg>
<!--BOTTOM-END-->
<!--TASK-START-->
<!-- STATUS -->
<div id="status" class="abs" style="left:0;top:709px;width:1360px;height:19px;background:#f0eded;border-top:1px solid #9c9c9c;box-sizing:border-box"></div><div class="abs" style="left:1143px;top:711px;width:1px;height:16px;background:#d8d8d8"></div><div class="abs" style="left:1172px;top:711px;width:1px;height:16px;background:#d8d8d8"></div>
<div class="abs" style="left:3px;top:711px;font-size:13.5px;white-space:nowrap">Select command tool: No selected object</div>
<div class="abs" style="left:954px;top:710px;width:1px;height:17px;background:#c0c0c0"></div>
<div class="abs" style="left:960px;top:712px;font-size:12.35px;white-space:nowrap;">1184.90 -301.57 0.00</div>
<div class="abs" style="left:1148px;top:711px;width:22px;height:14px;border:1px solid #b8b8b8;border-radius:2px;background:#f4f4f4;font-size:13px;line-height:14px;text-align:center;color:#686868;box-sizing:content-box">U</div>
<!-- TASKBAR -->
<div id="taskbar" class="abs" style="left:0;top:728px;width:1360px;height:40px;background:linear-gradient(90deg,#1b2e50 0,#1d3153 540px,#2b3e60 575px,#3a4c6b 620px,#34495f 700px,#3a4e68 760px,#465574 830px,#646a8a 870px,#666d8d 950px,#5c6486 1020px,#4a5678 1080px,#38486b 1140px,#2d3d61 1200px,#2a3a5c 1360px);"></div><svg class="abs" style="left:0;top:728px" width="1360" height="40" viewBox="0 728 1360 40"><g fill="#2c3858" opacity=".55"><ellipse cx="925" cy="739" rx="5" ry="3.500"/><ellipse cx="960" cy="745" rx="5" ry="3.500"/><ellipse cx="985" cy="741" rx="5" ry="3.500"/><ellipse cx="1020" cy="748" rx="5" ry="3.500"/><ellipse cx="1055" cy="754" rx="5" ry="3.500"/><ellipse cx="955" cy="759" rx="5" ry="3.500"/><ellipse cx="990" cy="763" rx="5" ry="3.500"/><ellipse cx="1030" cy="765" rx="5" ry="3.500"/><ellipse cx="920" cy="752" rx="5" ry="3.500"/><ellipse cx="1085" cy="762" rx="5" ry="3.500"/></g><g fill="#2a4050" opacity=".35"><ellipse cx="610" cy="745" rx="22" ry="12"/><ellipse cx="680" cy="752" rx="30" ry="14"/><ellipse cx="740" cy="748" rx="26" ry="13"/><ellipse cx="830" cy="758" rx="30" ry="10"/></g></svg>
<div class="abs" style="left:0;top:728px;width:1360px;height:40px;background:linear-gradient(180deg,rgba(255,255,255,.18) 0,rgba(255,255,255,.05) 2px,rgba(0,0,0,0) 20px,rgba(0,0,0,.18) 40px);"></div>
<div class="abs" style="left:122px;top:729px;width:158px;height:38px;box-sizing:border-box;border:1px solid #8c9bb5;border-radius:3px;background:linear-gradient(180deg,#66779a 0,#4b5d82 45%,#33466b 55%,#2f4166 100%);"></div>
<div class="abs" style="left:346px;top:729px;width:158px;height:38px;box-sizing:border-box;border:1px solid #c4cfe0;border-radius:3px;background:linear-gradient(180deg,#a9b5c9 0,#8493ae 45%,#66789a 55%,#62759a 100%);"></div>
<div class="abs" style="left:167px;top:741px;font-size:11.4px;color:#fff;white-space:nowrap;">BAN THO CHUYEN</div>
<div class="abs" style="left:391px;top:741px;font-size:11.7px;color:#fff;white-space:nowrap;">bat dao.jdp - JDP...</div>
<div class="abs" style="left:1346px;top:728px;width:14px;height:40px;background:linear-gradient(180deg,#7f8aa6,#56627f);border-left:1px solid #2a3550;box-sizing:border-box;opacity:.9"></div>
<div class="abs" style="left:1286px;top:733px;font-size:12px;color:#fff;white-space:nowrap;">6:25 SA</div>
<div class="abs" style="left:1276px;top:750px;font-size:12px;color:#fff;white-space:nowrap;">01/10/2018</div>
<svg class="abs" style="left:0;top:660px" width="1360" height="108" viewBox="0 660 1360 108">
<defs>
<radialGradient id="orb" cx=".5" cy=".35" r=".7"><stop offset="0" stop-color="#7fc4f0"/><stop offset=".45" stop-color="#2a6fb8"/><stop offset="1" stop-color="#0d2a58"/></radialGradient>
<linearGradient id="fold" x1="0" y1="0" x2="1" y2="0"><stop offset="0" stop-color="#f5dc84"/><stop offset="1" stop-color="#e0bc55"/></linearGradient>
</defs>
<!-- start orb -->
<circle cx="27" cy="748" r="18.500" fill="url(#orb)" stroke="#3b6ea8" stroke-width="1.200"/>
<ellipse cx="27" cy="739" rx="14" ry="8" fill="#fff" opacity=".22"/>
<path d="M17.500 740.500C20.500 738.500 23.500 738.500 26.500 740.200L24.800 747.500C22 746 19 746 15.800 747.800Z" fill="#f0552a"/>
<path d="M28.300 740.800C31.500 742.500 34.500 742.300 37.800 740.300L36 747.600C33 749.500 29.800 749.600 26.600 748Z" fill="#8fc641"/>
<path d="M15.300 749.600C18.500 747.800 21.500 747.800 24.400 749.300L22.600 756.600C19.800 755 16.800 755 13.600 756.900Z" fill="#3a9be0"/>
<path d="M26.200 749.900C29.400 751.500 32.400 751.300 35.600 749.400L33.800 756.700C30.800 758.500 27.600 758.600 24.400 757Z" fill="#fcc419"/>
<!-- paint icon -->
<path d="M74 752C73 743 82 736.500 92 737.500C101 738.500 104 746 100 752C97 756 93.500 754 92 757C90.500 760.500 84 761.500 79.500 759C76 757 74.500 755 74 752Z" fill="#c9ddf2" stroke="#7d9cc0" stroke-width="1"/>
<circle cx="80.500" cy="747" r="2.700" fill="#e04a3a"/><circle cx="85.500" cy="742.500" r="2.600" fill="#7bc043"/><circle cx="92.500" cy="741.500" r="2.600" fill="#f2b632"/><circle cx="84" cy="753.500" r="2.800" fill="#3a4f7a"/>
<path d="M89 762L97.500 741L100 742L92 763Z" fill="#e8923a"/><path d="M97.500 741.500C97.500 738 100 734 104 733C104 737 102.500 741 100 742.500Z" fill="#f0d0a0"/>
<!-- folder -->
<path d="M133 735L141 733.500L143 736L154.500 734.500V759L139 763L133 760Z" fill="url(#fold)" stroke="#c9a43e" stroke-width=".8"/><path d="M139 741L154.500 738V759L139 763Z" fill="#f3da82" stroke="#d2ae49" stroke-width=".6"/><rect x="151.500" y="754" width="2.500" height="5" fill="#d8e4f0"/>
<!-- coccoc -->
<circle cx="312.500" cy="748" r="15.500" fill="#4caf50" stroke="#eaf4ea" stroke-width="1.600"/>
<circle cx="311" cy="749.500" r="7.300" fill="none" stroke="#fff" stroke-width="4"/><path d="M311 749.500L317.500 739L323 743L322.500 749.500Z" fill="#4caf50"/><circle cx="311" cy="749.500" r="2.800" fill="#fff"/>
<path d="M315 741L316 734.500L318.500 735.500L317 742Z M319.500 743.500L325 737.500L327 739.500L321 745Z M321.500 747.500L327.500 745.500L328 748.500L322 750Z" fill="#f47b20"/>
<!-- jdpaint icon -->
<path d="M356 749L369 741.500L386 746V756L369 762.500L356 757Z" fill="#8a8a8a"/><path d="M356 749L369 754.500V762.500L356 757Z" fill="#3a3a3a"/><path d="M369 754.500L386 746V756L369 762.500Z" fill="#2a2a2a"/>
<rect x="368" y="733" width="10" height="3" rx="1" fill="#c8c8c8" stroke="#555" stroke-width=".6"/><rect x="370" y="736" width="6" height="9" fill="#b8b8b8" stroke="#666" stroke-width=".5"/><path d="M370 745H376V752L373 755L370 752Z" fill="#f0a030"/><path d="M371.500 753L375 753L377 757V761L373.500 762L371.500 758Z" fill="#d8a8f0"/>
<!-- tray -->
<path d="M1173.500 751.500H1181.500L1177.500 747Z" fill="#fff"/>
<g fill="none" stroke="#fff" stroke-width="1.400"><rect x="1200" y="745" width="9" height="8"/><path d="M1199 755.500H1209M1204.500 753V755.500"/><path d="M1196.500 742.500V748H1200M1195.500 743H1198.500V745.500H1195.500Z"/></g>
<path d="M1221 747H1223.500L1227.500 743V756L1223.500 752H1221Z" fill="#fff"/><path d="M1229.500 746.500C1231 748 1231 751 1229.500 752.500" fill="none" stroke="#fff" stroke-width="1.100" opacity=".8"/><path d="M1231.500 744.500C1234 747 1234 752 1231.500 754.500" fill="none" stroke="#fff" stroke-width="1" opacity=".5"/>
<rect x="1242.500" y="741.500" width="15" height="15" fill="#1e96f0"/><path d="M1247 745H1253.500V747H1249.300V748.300H1253V750.200H1249.300V751.500H1253.500V753.500H1247Z" fill="#fff"/>
<!-- LOGO -->
<rect x="1268" y="687" width="32" height="50" rx="6" fill="#ed1c24"/>
<path d="M1297.500 705.500C1296 699.500 1292.500 698.800 1288.500 698.800C1281.500 698.800 1278.300 706 1278.300 715.500C1278.300 725 1281.500 732.200 1288.500 732.200C1292.500 732.200 1296 731.500 1297.500 725.500" fill="none" stroke="#fff" stroke-width="7.200"/>
<path d="M1289 693V704M1289 727V738" stroke="#ed1c24" stroke-width="1.300"/>
<path d="M1305 736.500V707M1321.300 736.500V696" stroke="#2b4a9a" stroke-width="4.200" fill="none"/>
<path d="M1304.500 705.500L1321 735.500" stroke="#2b4a9a" stroke-width="7" fill="none"/><path d="M1305.500 707L1320.500 734" stroke="#e8ecf4" stroke-width=".8" fill="none"/>
<path d="M1309.300 691.500L1311.100 696.300L1316.200 696.500L1312.200 699.700L1313.600 704.600L1309.300 701.800L1305 704.600L1306.400 699.700L1302.400 696.500L1307.500 696.300Z" fill="#b07a48"/>
<path d="M1311.500 692C1313 682 1317 674 1322 669.500C1321.500 676 1316.500 684 1314 693Z" fill="#ed1c24"/>
<path d="M1313.800 694C1317 684 1324 675 1331 670C1329.500 677 1320.500 686 1316 695.500Z" fill="#2b4a9a"/>
<path d="M1316 696C1318.500 690 1323 684 1328.500 681.500C1327 686 1321.500 690 1317.800 697Z" fill="#f7941d"/>
<path d="M1348 706C1346.500 700.500 1344 698.300 1340 698.300C1333.500 698.300 1330 705.500 1330 715.800C1330 726 1333.500 733.400 1340 733.400C1344 733.400 1346.500 731 1348 725.500" fill="none" stroke="#f7941d" stroke-width="5.800"/>
<path d="M1339.500 694V702" stroke="#f0f0f0" stroke-width="1.200"/><path d="M1339.500 730V738" stroke="#3a4868" stroke-width="1.200"/>
<rect x="1267.500" y="741" width="85" height="14" rx="6" fill="#24407e" stroke="#4a66a8" stroke-width="1"/>
<text x="1310" y="752.300" font-family="Liberation Serif, serif" font-weight="bold" font-size="12.500px" fill="#fff" text-anchor="middle" textLength="77" lengthAdjust="spacingAndGlyphs">Khomaucnc.vn</text>
<path d="M1275 759.500H1346" stroke="#b07a48" stroke-width="1"/>
</svg>
<!--TASK-END-->
</body>
</html>
